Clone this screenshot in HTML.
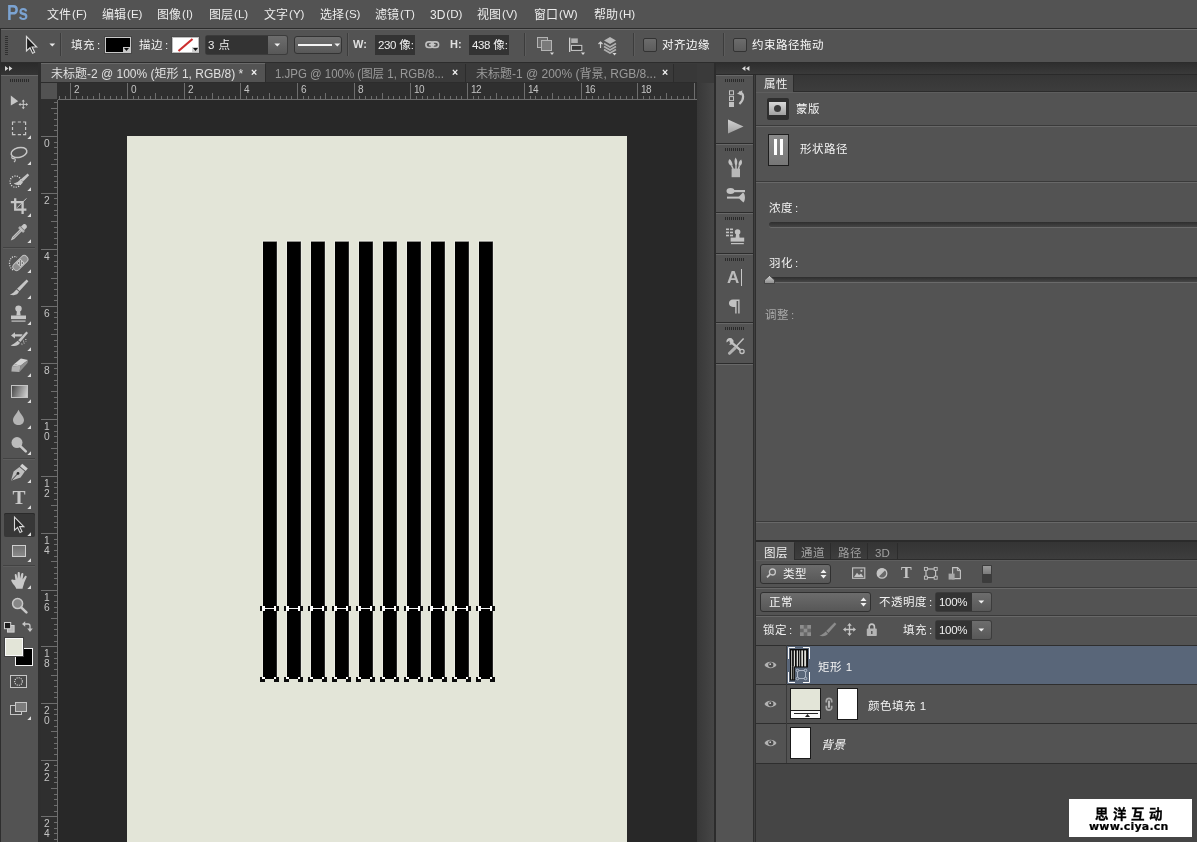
<!DOCTYPE html>
<html lang="zh-CN"><head><meta charset="utf-8"><title>Photoshop</title>
<style>
html,body{margin:0;padding:0;background:#535353;}
body{width:1197px;height:842px;overflow:hidden;}
#root{position:relative;width:1197px;height:842px;overflow:hidden;background:#535353;
 font-family:"Liberation Sans","Noto Sans CJK SC",sans-serif;font-size:12px;color:#e6e6e6;will-change:transform;transform:translateZ(0);}
#root div,#root svg,#root span.a{position:absolute;box-sizing:border-box;}
#root svg{overflow:visible;}
.t{white-space:nowrap;}
</style></head>
<body><div id="root">
<div style="left:0px;top:0px;width:1197px;height:28px;background:#535353;"></div>
<div style="left:0px;top:28px;width:1197px;height:1px;background:#2c2c2c;"></div>
<div style="left:0px;top:29px;width:1197px;height:1px;background:#6b6b6b;"></div>
<div style="left:0px;top:30px;width:1197px;height:32px;background:#535353;"></div>
<div style="left:0px;top:62px;width:1197px;height:1px;background:#2c2c2c;"></div>
<div class="t" style="left:7px;top:1px;font-size:21.5px;line-height:25px;height:25px;color:#7ba3d2;white-space:nowrap;font-weight:bold;transform-origin:0 50%;transform:scaleX(0.8);letter-spacing:0px;">Ps</div>
<div class="t" style="left:47px;top:6.6px;font-size:12px;line-height:16px;height:16px;color:#ececec;white-space:nowrap;width:38px;">文件<span style="font-size:11.6px;margin-left:1px;position:relative;top:-0.6px;">(F)</span></div>
<div class="t" style="left:102px;top:6.6px;font-size:12px;line-height:16px;height:16px;color:#ececec;white-space:nowrap;width:38px;">编辑<span style="font-size:11.6px;margin-left:1px;position:relative;top:-0.6px;">(E)</span></div>
<div class="t" style="left:157px;top:6.6px;font-size:12px;line-height:16px;height:16px;color:#ececec;white-space:nowrap;width:35px;">图像<span style="font-size:11.6px;margin-left:1px;position:relative;top:-0.6px;">(I)</span></div>
<div class="t" style="left:209px;top:6.6px;font-size:12px;line-height:16px;height:16px;color:#ececec;white-space:nowrap;width:38px;">图层<span style="font-size:11.6px;margin-left:1px;position:relative;top:-0.6px;">(L)</span></div>
<div class="t" style="left:264px;top:6.6px;font-size:12px;line-height:16px;height:16px;color:#ececec;white-space:nowrap;width:39px;">文字<span style="font-size:11.6px;margin-left:1px;position:relative;top:-0.6px;">(Y)</span></div>
<div class="t" style="left:320px;top:6.6px;font-size:12px;line-height:16px;height:16px;color:#ececec;white-space:nowrap;width:38px;">选择<span style="font-size:11.6px;margin-left:1px;position:relative;top:-0.6px;">(S)</span></div>
<div class="t" style="left:375px;top:6.6px;font-size:12px;line-height:16px;height:16px;color:#ececec;white-space:nowrap;width:37px;">滤镜<span style="font-size:11.6px;margin-left:1px;position:relative;top:-0.6px;">(T)</span></div>
<div class="t" style="left:430px;top:6.6px;font-size:12px;line-height:16px;height:16px;color:#ececec;white-space:nowrap;width:31px;">3D<span style="font-size:11.6px;margin-left:1px;position:relative;top:-0.6px;">(D)</span></div>
<div class="t" style="left:477px;top:6.6px;font-size:12px;line-height:16px;height:16px;color:#ececec;white-space:nowrap;width:41px;">视图<span style="font-size:11.6px;margin-left:1px;position:relative;top:-0.6px;">(V)</span></div>
<div class="t" style="left:534px;top:6.6px;font-size:12px;line-height:16px;height:16px;color:#ececec;white-space:nowrap;width:44px;">窗口<span style="font-size:11.6px;margin-left:1px;position:relative;top:-0.6px;">(W)</span></div>
<div class="t" style="left:594px;top:6.6px;font-size:12px;line-height:16px;height:16px;color:#ececec;white-space:nowrap;width:42px;">帮助<span style="font-size:11.6px;margin-left:1px;position:relative;top:-0.6px;">(H)</span></div>
<div style="left:5px;top:36px;width:3px;height:1px;background:#303030;"></div>
<div style="left:5px;top:38px;width:3px;height:1px;background:#303030;"></div>
<div style="left:5px;top:40px;width:3px;height:1px;background:#303030;"></div>
<div style="left:5px;top:42px;width:3px;height:1px;background:#303030;"></div>
<div style="left:5px;top:44px;width:3px;height:1px;background:#303030;"></div>
<div style="left:5px;top:46px;width:3px;height:1px;background:#303030;"></div>
<div style="left:5px;top:48px;width:3px;height:1px;background:#303030;"></div>
<div style="left:5px;top:50px;width:3px;height:1px;background:#303030;"></div>
<div style="left:5px;top:52px;width:3px;height:1px;background:#303030;"></div>
<div style="left:5px;top:54px;width:3px;height:1px;background:#303030;"></div>
<div style="left:0px;top:29px;width:1px;height:34px;background:#2e2e2e;"></div>
<svg style="left:25px;top:35px;" width="14" height="20" viewBox="0 0 14 20"><path d="M1.5 1.5 L1.5 16 L5 12.8 L7.6 18.2 L9.6 17.2 L7.1 12 L11.6 12 Z" fill="#1e1e1e" stroke="#d8d8d8" stroke-width="1.2" stroke-linejoin="miter"/></svg>
<svg style="left:48.6px;top:43.4px;" width="7" height="4" viewBox="0 0 7 4"><path d="M0.4 0.4 L6.2 0.4 L3.3 3.4 Z" fill="#e8e8e8"/></svg>
<div style="left:60px;top:33px;width:1px;height:23px;background:#3c3c3c;"></div>
<div style="left:61px;top:33px;width:1px;height:23px;background:#5c5c5c;"></div>
<div class="t" style="left:71px;top:37px;font-size:11.5px;line-height:16px;height:16px;color:#f0f0f0;white-space:nowrap;letter-spacing:0.5px;">填充<span style="margin-left:2px">:</span></div>
<div style="left:104px;top:36px;width:28px;height:18px;background:#474747;"></div>
<div style="left:105px;top:37px;width:26px;height:16px;background:#000;border:1px solid #c8c8c8;"></div>
<svg style="left:123px;top:47px;" width="7" height="5" viewBox="0 0 7 5"><rect x="0" y="0" width="7" height="5" fill="#c8c8c8"/><path d="M1 1 L6 1 L3.5 4 Z" fill="#111"/></svg>
<div class="t" style="left:139px;top:37px;font-size:11.5px;line-height:16px;height:16px;color:#f0f0f0;white-space:nowrap;letter-spacing:0.5px;">描边<span style="margin-left:2px">:</span></div>
<div style="left:171px;top:36px;width:29px;height:18px;background:#4b4b4b;"></div>
<div style="left:172px;top:37px;width:27px;height:16px;background:#fff;border:1px solid #bdbdbd;"></div>
<svg style="left:173px;top:38px;" width="25" height="14" viewBox="0 0 25 14"><path d="M5.5 13 L19.5 1" stroke="#cc2e2e" stroke-width="2.2" fill="none"/></svg>
<svg style="left:192px;top:47px;" width="7" height="5" viewBox="0 0 7 5"><rect x="0" y="0" width="7" height="5" fill="#d0d0d0"/><path d="M1 1 L6 1 L3.5 4 Z" fill="#111"/></svg>
<div style="left:205px;top:35px;width:83px;height:20px;background:#3c3c3c;border-radius:3px;"></div>
<div style="left:206px;top:36px;width:62px;height:18px;background:#333;"></div>
<div style="left:268px;top:36px;width:19px;height:18px;background:linear-gradient(#6d6d6d,#585858);border-radius:0 2px 2px 0;"></div>
<svg style="left:274px;top:43px;" width="7" height="4" viewBox="0 0 7 4"><path d="M0.4 0.4 L6.2 0.4 L3.3 3.4 Z" fill="#f0f0f0"/></svg>
<div class="t" style="left:208px;top:37px;font-size:11.5px;line-height:16px;height:16px;color:#f0f0f0;white-space:nowrap;letter-spacing:0.5px;">3 点</div>
<div style="left:294px;top:36px;width:48px;height:18px;background:linear-gradient(#6e6e6e,#585858);border-radius:3px;border:1px solid #333;"></div>
<div style="left:298px;top:44px;width:34px;height:2px;background:#f4f4f4;"></div>
<svg style="left:334px;top:43px;" width="7" height="4" viewBox="0 0 7 4"><path d="M0.4 0.4 L6.2 0.4 L3.3 3.4 Z" fill="#f0f0f0"/></svg>
<div style="left:347px;top:33px;width:1px;height:23px;background:#3c3c3c;"></div>
<div style="left:348px;top:33px;width:1px;height:23px;background:#5c5c5c;"></div>
<div class="t" style="left:353px;top:36px;font-size:11px;line-height:16px;height:16px;color:#e0e0e0;white-space:nowrap;font-weight:bold;">W:</div>
<div style="left:375px;top:35px;width:40px;height:20px;background:#333;overflow:hidden;"></div>
<div class="t" style="left:378px;top:37px;font-size:11.5px;line-height:16px;height:16px;color:#f0f0f0;white-space:nowrap;"><span style="letter-spacing:-0.4px">230</span> 像:</div>
<svg style="left:425px;top:41px;" width="15" height="8" viewBox="0 0 15 8"><rect x="0.9" y="0.9" width="7.4" height="5.6" rx="2.8" fill="none" stroke="#c0c0c0" stroke-width="1.6"/><rect x="6.2" y="0.9" width="7.4" height="5.6" rx="2.8" fill="none" stroke="#c0c0c0" stroke-width="1.6"/><rect x="4" y="2.9" width="6.5" height="1.6" fill="#c8c8c8"/></svg>
<div class="t" style="left:450px;top:36px;font-size:11px;line-height:16px;height:16px;color:#e0e0e0;white-space:nowrap;font-weight:bold;">H:</div>
<div style="left:469px;top:35px;width:40px;height:20px;background:#333;overflow:hidden;"></div>
<div class="t" style="left:472px;top:37px;font-size:11.5px;line-height:16px;height:16px;color:#f0f0f0;white-space:nowrap;"><span style="letter-spacing:-0.4px">438</span> 像:</div>
<div style="left:524px;top:33px;width:1px;height:23px;background:#3c3c3c;"></div>
<div style="left:525px;top:33px;width:1px;height:23px;background:#5c5c5c;"></div>
<svg style="left:537px;top:37px;" width="18" height="20" viewBox="0 0 18 20"><rect x="0.5" y="0.5" width="10" height="10" fill="#6a6a6a" stroke="#b4b4b4"/><rect x="4.5" y="3.5" width="10" height="10" fill="#7a7a7a" stroke="#b4b4b4"/><path d="M13 15.5 L17 15.5 L15 18 Z" fill="#d8d8d8"/></svg>
<svg style="left:568px;top:37px;" width="18" height="20" viewBox="0 0 18 20"><rect x="1" y="0.6" width="1.3" height="14.4" fill="#d0d0d0"/><rect x="3.2" y="1.4" width="6.6" height="4.6" fill="#b0b0b0"/><rect x="3.4" y="8.4" width="10.4" height="5" fill="#3a3a3a" stroke="#cccccc"/><path d="M13 15.5 L17 15.5 L15 18 Z" fill="#d8d8d8"/></svg>
<svg style="left:598px;top:36px;" width="22" height="22" viewBox="0 0 22 22"><path d="M2.5 12 L2.5 6 M0.5 8 L2.5 6 L4.5 8" stroke="#d0d0d0" stroke-width="1.2" fill="none"/><path d="M12 1 L18 4.5 L12 8 L6 4.5 Z" fill="#b8b8b8"/><path d="M6 7.5 L12 11 L18 7.5 M6 10.5 L12 14 L18 10.5 M6 13.5 L12 17 L18 13.5" stroke="#b0b0b0" stroke-width="1.6" fill="none"/><path d="M14.5 17 L18.5 17 L16.5 19.5 Z" fill="#d8d8d8"/></svg>
<div style="left:633px;top:33px;width:1px;height:23px;background:#3c3c3c;"></div>
<div style="left:634px;top:33px;width:1px;height:23px;background:#5c5c5c;"></div>
<div style="left:643px;top:38px;width:14px;height:14px;background:linear-gradient(#6c6c6c,#5c5c5c);border:1px solid #333;border-radius:2px;"></div>
<div class="t" style="left:662px;top:37px;font-size:11.5px;line-height:16px;height:16px;color:#fafafa;white-space:nowrap;letter-spacing:0.5px;">对齐边缘</div>
<div style="left:723px;top:33px;width:1px;height:23px;background:#3c3c3c;"></div>
<div style="left:724px;top:33px;width:1px;height:23px;background:#5c5c5c;"></div>
<div style="left:733px;top:38px;width:14px;height:14px;background:linear-gradient(#6c6c6c,#5c5c5c);border:1px solid #333;border-radius:2px;"></div>
<div class="t" style="left:752px;top:37px;font-size:11.5px;line-height:16px;height:16px;color:#fafafa;white-space:nowrap;letter-spacing:0.5px;">约束路径拖动</div>
<div style="left:0px;top:63px;width:1197px;height:20px;background:#3a3a3a;"></div>
<div style="left:0px;top:63px;width:38px;height:12px;background:linear-gradient(#2a2a2a,#343434);"></div>
<svg style="left:5px;top:66px;" width="8" height="5" viewBox="0 0 8 5"><path d="M0 0 L3.4 2.5 L0 5 Z M4 0 L7.4 2.5 L4 5 Z" fill="#d8d8d8"/></svg>
<div style="left:38px;top:63px;width:3px;height:779px;background:#2e2e2e;"></div>
<div style="left:41px;top:63px;width:224px;height:20px;background:#535353;"></div>
<div style="left:41px;top:63px;width:224px;height:1px;background:#6a6a6a;"></div>
<div style="left:41px;top:82px;width:656px;height:1px;background:#2c2c2c;"></div>
<div style="left:265px;top:64px;width:1px;height:19px;background:#2c2c2c;"></div>
<div style="left:465px;top:64px;width:1px;height:19px;background:#2c2c2c;"></div>
<div style="left:673px;top:64px;width:1px;height:19px;background:#2c2c2c;"></div>
<div style="left:266px;top:64px;width:199px;height:18px;background:#3a3a3a;"></div>
<div style="left:466px;top:64px;width:207px;height:18px;background:#3a3a3a;"></div>
<div style="left:674px;top:64px;width:23px;height:18px;background:#383838;"></div>
<div class="t" style="left:51px;top:66px;font-size:12px;line-height:16px;height:16px;color:#e0e0e0;white-space:nowrap;">未标题-2 @ 100% (矩形 1, RGB/8) *</div>
<div class="t" style="left:275px;top:66px;font-size:12px;line-height:16px;height:16px;color:#9a9a9a;white-space:nowrap;transform-origin:0 50%;transform:scaleX(0.955);">1.JPG @ 100% (图层 1, RGB/8...</div>
<div class="t" style="left:476px;top:66px;font-size:12px;line-height:16px;height:16px;color:#9a9a9a;white-space:nowrap;">未标题-1 @ 200% (背景, RGB/8...</div>
<div class="t" style="left:249px;top:63.5px;font-size:10.5px;line-height:16px;height:16px;color:#f4f4f4;white-space:nowrap;width:10px;text-align:center;font-weight:bold;">×</div>
<div class="t" style="left:450px;top:63.5px;font-size:10.5px;line-height:16px;height:16px;color:#f4f4f4;white-space:nowrap;width:10px;text-align:center;font-weight:bold;">×</div>
<div class="t" style="left:660px;top:63.5px;font-size:10.5px;line-height:16px;height:16px;color:#f4f4f4;white-space:nowrap;width:10px;text-align:center;font-weight:bold;">×</div>
<div style="left:41px;top:83px;width:656px;height:17px;background:#2f2f2f;"></div>
<div style="left:41px;top:100px;width:17px;height:742px;background:#2f2f2f;"></div>
<div style="left:41px;top:83px;width:16px;height:16px;background:#525252;"></div>
<div style="left:58px;top:100px;width:639px;height:742px;background:#282828;"></div>
<div style="left:58px;top:99px;width:639px;height:1px;background:#6e6e6e;"></div>
<div style="left:57px;top:100px;width:1px;height:742px;background:#6e6e6e;"></div>
<svg style="left:41px;top:83px;" width="656" height="17" viewBox="0 0 656 17"><rect x="18" y="13" width="1" height="3" fill="#6e6e6e"/><rect x="24" y="13" width="1" height="3" fill="#6e6e6e"/><rect x="29" y="0" width="1" height="16" fill="#6e6e6e"/><rect x="35" y="13" width="1" height="3" fill="#6e6e6e"/><rect x="41" y="13" width="1" height="3" fill="#6e6e6e"/><rect x="46" y="13" width="1" height="3" fill="#6e6e6e"/><rect x="52" y="13" width="1" height="3" fill="#6e6e6e"/><rect x="58" y="10" width="1" height="6" fill="#6e6e6e"/><rect x="63" y="13" width="1" height="3" fill="#6e6e6e"/><rect x="69" y="13" width="1" height="3" fill="#6e6e6e"/><rect x="75" y="13" width="1" height="3" fill="#6e6e6e"/><rect x="80" y="13" width="1" height="3" fill="#6e6e6e"/><rect x="86" y="0" width="1" height="16" fill="#6e6e6e"/><rect x="92" y="13" width="1" height="3" fill="#6e6e6e"/><rect x="97" y="13" width="1" height="3" fill="#6e6e6e"/><rect x="103" y="13" width="1" height="3" fill="#6e6e6e"/><rect x="109" y="13" width="1" height="3" fill="#6e6e6e"/><rect x="114" y="10" width="1" height="6" fill="#6e6e6e"/><rect x="120" y="13" width="1" height="3" fill="#6e6e6e"/><rect x="126" y="13" width="1" height="3" fill="#6e6e6e"/><rect x="131" y="13" width="1" height="3" fill="#6e6e6e"/><rect x="137" y="13" width="1" height="3" fill="#6e6e6e"/><rect x="143" y="0" width="1" height="16" fill="#6e6e6e"/><rect x="148" y="13" width="1" height="3" fill="#6e6e6e"/><rect x="154" y="13" width="1" height="3" fill="#6e6e6e"/><rect x="160" y="13" width="1" height="3" fill="#6e6e6e"/><rect x="165" y="13" width="1" height="3" fill="#6e6e6e"/><rect x="171" y="10" width="1" height="6" fill="#6e6e6e"/><rect x="177" y="13" width="1" height="3" fill="#6e6e6e"/><rect x="182" y="13" width="1" height="3" fill="#6e6e6e"/><rect x="188" y="13" width="1" height="3" fill="#6e6e6e"/><rect x="194" y="13" width="1" height="3" fill="#6e6e6e"/><rect x="199" y="0" width="1" height="16" fill="#6e6e6e"/><rect x="205" y="13" width="1" height="3" fill="#6e6e6e"/><rect x="211" y="13" width="1" height="3" fill="#6e6e6e"/><rect x="216" y="13" width="1" height="3" fill="#6e6e6e"/><rect x="222" y="13" width="1" height="3" fill="#6e6e6e"/><rect x="228" y="10" width="1" height="6" fill="#6e6e6e"/><rect x="233" y="13" width="1" height="3" fill="#6e6e6e"/><rect x="239" y="13" width="1" height="3" fill="#6e6e6e"/><rect x="245" y="13" width="1" height="3" fill="#6e6e6e"/><rect x="250" y="13" width="1" height="3" fill="#6e6e6e"/><rect x="256" y="0" width="1" height="16" fill="#6e6e6e"/><rect x="262" y="13" width="1" height="3" fill="#6e6e6e"/><rect x="267" y="13" width="1" height="3" fill="#6e6e6e"/><rect x="273" y="13" width="1" height="3" fill="#6e6e6e"/><rect x="279" y="13" width="1" height="3" fill="#6e6e6e"/><rect x="284" y="10" width="1" height="6" fill="#6e6e6e"/><rect x="290" y="13" width="1" height="3" fill="#6e6e6e"/><rect x="296" y="13" width="1" height="3" fill="#6e6e6e"/><rect x="301" y="13" width="1" height="3" fill="#6e6e6e"/><rect x="307" y="13" width="1" height="3" fill="#6e6e6e"/><rect x="313" y="0" width="1" height="16" fill="#6e6e6e"/><rect x="318" y="13" width="1" height="3" fill="#6e6e6e"/><rect x="324" y="13" width="1" height="3" fill="#6e6e6e"/><rect x="330" y="13" width="1" height="3" fill="#6e6e6e"/><rect x="335" y="13" width="1" height="3" fill="#6e6e6e"/><rect x="341" y="10" width="1" height="6" fill="#6e6e6e"/><rect x="347" y="13" width="1" height="3" fill="#6e6e6e"/><rect x="352" y="13" width="1" height="3" fill="#6e6e6e"/><rect x="358" y="13" width="1" height="3" fill="#6e6e6e"/><rect x="364" y="13" width="1" height="3" fill="#6e6e6e"/><rect x="369" y="0" width="1" height="16" fill="#6e6e6e"/><rect x="375" y="13" width="1" height="3" fill="#6e6e6e"/><rect x="381" y="13" width="1" height="3" fill="#6e6e6e"/><rect x="386" y="13" width="1" height="3" fill="#6e6e6e"/><rect x="392" y="13" width="1" height="3" fill="#6e6e6e"/><rect x="398" y="10" width="1" height="6" fill="#6e6e6e"/><rect x="403" y="13" width="1" height="3" fill="#6e6e6e"/><rect x="409" y="13" width="1" height="3" fill="#6e6e6e"/><rect x="415" y="13" width="1" height="3" fill="#6e6e6e"/><rect x="420" y="13" width="1" height="3" fill="#6e6e6e"/><rect x="426" y="0" width="1" height="16" fill="#6e6e6e"/><rect x="432" y="13" width="1" height="3" fill="#6e6e6e"/><rect x="437" y="13" width="1" height="3" fill="#6e6e6e"/><rect x="443" y="13" width="1" height="3" fill="#6e6e6e"/><rect x="449" y="13" width="1" height="3" fill="#6e6e6e"/><rect x="455" y="10" width="1" height="6" fill="#6e6e6e"/><rect x="460" y="13" width="1" height="3" fill="#6e6e6e"/><rect x="466" y="13" width="1" height="3" fill="#6e6e6e"/><rect x="472" y="13" width="1" height="3" fill="#6e6e6e"/><rect x="477" y="13" width="1" height="3" fill="#6e6e6e"/><rect x="483" y="0" width="1" height="16" fill="#6e6e6e"/><rect x="489" y="13" width="1" height="3" fill="#6e6e6e"/><rect x="494" y="13" width="1" height="3" fill="#6e6e6e"/><rect x="500" y="13" width="1" height="3" fill="#6e6e6e"/><rect x="506" y="13" width="1" height="3" fill="#6e6e6e"/><rect x="511" y="10" width="1" height="6" fill="#6e6e6e"/><rect x="517" y="13" width="1" height="3" fill="#6e6e6e"/><rect x="523" y="13" width="1" height="3" fill="#6e6e6e"/><rect x="528" y="13" width="1" height="3" fill="#6e6e6e"/><rect x="534" y="13" width="1" height="3" fill="#6e6e6e"/><rect x="540" y="0" width="1" height="16" fill="#6e6e6e"/><rect x="545" y="13" width="1" height="3" fill="#6e6e6e"/><rect x="551" y="13" width="1" height="3" fill="#6e6e6e"/><rect x="557" y="13" width="1" height="3" fill="#6e6e6e"/><rect x="562" y="13" width="1" height="3" fill="#6e6e6e"/><rect x="568" y="10" width="1" height="6" fill="#6e6e6e"/><rect x="574" y="13" width="1" height="3" fill="#6e6e6e"/><rect x="579" y="13" width="1" height="3" fill="#6e6e6e"/><rect x="585" y="13" width="1" height="3" fill="#6e6e6e"/><rect x="591" y="13" width="1" height="3" fill="#6e6e6e"/><rect x="596" y="0" width="1" height="16" fill="#6e6e6e"/><rect x="602" y="13" width="1" height="3" fill="#6e6e6e"/><rect x="608" y="13" width="1" height="3" fill="#6e6e6e"/><rect x="613" y="13" width="1" height="3" fill="#6e6e6e"/><rect x="619" y="13" width="1" height="3" fill="#6e6e6e"/><rect x="625" y="10" width="1" height="6" fill="#6e6e6e"/><rect x="630" y="13" width="1" height="3" fill="#6e6e6e"/><rect x="636" y="13" width="1" height="3" fill="#6e6e6e"/><rect x="642" y="13" width="1" height="3" fill="#6e6e6e"/><rect x="647" y="13" width="1" height="3" fill="#6e6e6e"/><rect x="653" y="0" width="1" height="16" fill="#6e6e6e"/></svg>
<div class="t" style="left:74px;top:84.4px;font-size:10px;line-height:12px;height:12px;color:#c4c4c4;white-space:nowrap;letter-spacing:-0.5px;">2</div>
<div class="t" style="left:131px;top:84.4px;font-size:10px;line-height:12px;height:12px;color:#c4c4c4;white-space:nowrap;letter-spacing:-0.5px;">0</div>
<div class="t" style="left:188px;top:84.4px;font-size:10px;line-height:12px;height:12px;color:#c4c4c4;white-space:nowrap;letter-spacing:-0.5px;">2</div>
<div class="t" style="left:244px;top:84.4px;font-size:10px;line-height:12px;height:12px;color:#c4c4c4;white-space:nowrap;letter-spacing:-0.5px;">4</div>
<div class="t" style="left:301px;top:84.4px;font-size:10px;line-height:12px;height:12px;color:#c4c4c4;white-space:nowrap;letter-spacing:-0.5px;">6</div>
<div class="t" style="left:358px;top:84.4px;font-size:10px;line-height:12px;height:12px;color:#c4c4c4;white-space:nowrap;letter-spacing:-0.5px;">8</div>
<div class="t" style="left:414px;top:84.4px;font-size:10px;line-height:12px;height:12px;color:#c4c4c4;white-space:nowrap;letter-spacing:-0.5px;">10</div>
<div class="t" style="left:471px;top:84.4px;font-size:10px;line-height:12px;height:12px;color:#c4c4c4;white-space:nowrap;letter-spacing:-0.5px;">12</div>
<div class="t" style="left:528px;top:84.4px;font-size:10px;line-height:12px;height:12px;color:#c4c4c4;white-space:nowrap;letter-spacing:-0.5px;">14</div>
<div class="t" style="left:585px;top:84.4px;font-size:10px;line-height:12px;height:12px;color:#c4c4c4;white-space:nowrap;letter-spacing:-0.5px;">16</div>
<div class="t" style="left:641px;top:84.4px;font-size:10px;line-height:12px;height:12px;color:#c4c4c4;white-space:nowrap;letter-spacing:-0.5px;">18</div>
<svg style="left:41px;top:100px;" width="17" height="742" viewBox="0 0 17 742"><rect x="13" y="2" width="3" height="1" fill="#6e6e6e"/><rect x="10" y="8" width="6" height="1" fill="#6e6e6e"/><rect x="13" y="13" width="3" height="1" fill="#6e6e6e"/><rect x="13" y="19" width="3" height="1" fill="#6e6e6e"/><rect x="13" y="25" width="3" height="1" fill="#6e6e6e"/><rect x="13" y="30" width="3" height="1" fill="#6e6e6e"/><rect x="0" y="36" width="16" height="1" fill="#6e6e6e"/><rect x="13" y="42" width="3" height="1" fill="#6e6e6e"/><rect x="13" y="47" width="3" height="1" fill="#6e6e6e"/><rect x="13" y="53" width="3" height="1" fill="#6e6e6e"/><rect x="13" y="59" width="3" height="1" fill="#6e6e6e"/><rect x="10" y="64" width="6" height="1" fill="#6e6e6e"/><rect x="13" y="70" width="3" height="1" fill="#6e6e6e"/><rect x="13" y="76" width="3" height="1" fill="#6e6e6e"/><rect x="13" y="81" width="3" height="1" fill="#6e6e6e"/><rect x="13" y="87" width="3" height="1" fill="#6e6e6e"/><rect x="0" y="93" width="16" height="1" fill="#6e6e6e"/><rect x="13" y="98" width="3" height="1" fill="#6e6e6e"/><rect x="13" y="104" width="3" height="1" fill="#6e6e6e"/><rect x="13" y="110" width="3" height="1" fill="#6e6e6e"/><rect x="13" y="115" width="3" height="1" fill="#6e6e6e"/><rect x="10" y="121" width="6" height="1" fill="#6e6e6e"/><rect x="13" y="127" width="3" height="1" fill="#6e6e6e"/><rect x="13" y="132" width="3" height="1" fill="#6e6e6e"/><rect x="13" y="138" width="3" height="1" fill="#6e6e6e"/><rect x="13" y="144" width="3" height="1" fill="#6e6e6e"/><rect x="0" y="149" width="16" height="1" fill="#6e6e6e"/><rect x="13" y="155" width="3" height="1" fill="#6e6e6e"/><rect x="13" y="161" width="3" height="1" fill="#6e6e6e"/><rect x="13" y="166" width="3" height="1" fill="#6e6e6e"/><rect x="13" y="172" width="3" height="1" fill="#6e6e6e"/><rect x="10" y="178" width="6" height="1" fill="#6e6e6e"/><rect x="13" y="183" width="3" height="1" fill="#6e6e6e"/><rect x="13" y="189" width="3" height="1" fill="#6e6e6e"/><rect x="13" y="195" width="3" height="1" fill="#6e6e6e"/><rect x="13" y="200" width="3" height="1" fill="#6e6e6e"/><rect x="0" y="206" width="16" height="1" fill="#6e6e6e"/><rect x="13" y="212" width="3" height="1" fill="#6e6e6e"/><rect x="13" y="217" width="3" height="1" fill="#6e6e6e"/><rect x="13" y="223" width="3" height="1" fill="#6e6e6e"/><rect x="13" y="229" width="3" height="1" fill="#6e6e6e"/><rect x="10" y="234" width="6" height="1" fill="#6e6e6e"/><rect x="13" y="240" width="3" height="1" fill="#6e6e6e"/><rect x="13" y="246" width="3" height="1" fill="#6e6e6e"/><rect x="13" y="251" width="3" height="1" fill="#6e6e6e"/><rect x="13" y="257" width="3" height="1" fill="#6e6e6e"/><rect x="0" y="263" width="16" height="1" fill="#6e6e6e"/><rect x="13" y="268" width="3" height="1" fill="#6e6e6e"/><rect x="13" y="274" width="3" height="1" fill="#6e6e6e"/><rect x="13" y="280" width="3" height="1" fill="#6e6e6e"/><rect x="13" y="285" width="3" height="1" fill="#6e6e6e"/><rect x="10" y="291" width="6" height="1" fill="#6e6e6e"/><rect x="13" y="297" width="3" height="1" fill="#6e6e6e"/><rect x="13" y="302" width="3" height="1" fill="#6e6e6e"/><rect x="13" y="308" width="3" height="1" fill="#6e6e6e"/><rect x="13" y="314" width="3" height="1" fill="#6e6e6e"/><rect x="0" y="319" width="16" height="1" fill="#6e6e6e"/><rect x="13" y="325" width="3" height="1" fill="#6e6e6e"/><rect x="13" y="331" width="3" height="1" fill="#6e6e6e"/><rect x="13" y="336" width="3" height="1" fill="#6e6e6e"/><rect x="13" y="342" width="3" height="1" fill="#6e6e6e"/><rect x="10" y="348" width="6" height="1" fill="#6e6e6e"/><rect x="13" y="353" width="3" height="1" fill="#6e6e6e"/><rect x="13" y="359" width="3" height="1" fill="#6e6e6e"/><rect x="13" y="365" width="3" height="1" fill="#6e6e6e"/><rect x="13" y="370" width="3" height="1" fill="#6e6e6e"/><rect x="0" y="376" width="16" height="1" fill="#6e6e6e"/><rect x="13" y="382" width="3" height="1" fill="#6e6e6e"/><rect x="13" y="387" width="3" height="1" fill="#6e6e6e"/><rect x="13" y="393" width="3" height="1" fill="#6e6e6e"/><rect x="13" y="399" width="3" height="1" fill="#6e6e6e"/><rect x="10" y="405" width="6" height="1" fill="#6e6e6e"/><rect x="13" y="410" width="3" height="1" fill="#6e6e6e"/><rect x="13" y="416" width="3" height="1" fill="#6e6e6e"/><rect x="13" y="422" width="3" height="1" fill="#6e6e6e"/><rect x="13" y="427" width="3" height="1" fill="#6e6e6e"/><rect x="0" y="433" width="16" height="1" fill="#6e6e6e"/><rect x="13" y="439" width="3" height="1" fill="#6e6e6e"/><rect x="13" y="444" width="3" height="1" fill="#6e6e6e"/><rect x="13" y="450" width="3" height="1" fill="#6e6e6e"/><rect x="13" y="456" width="3" height="1" fill="#6e6e6e"/><rect x="10" y="461" width="6" height="1" fill="#6e6e6e"/><rect x="13" y="467" width="3" height="1" fill="#6e6e6e"/><rect x="13" y="473" width="3" height="1" fill="#6e6e6e"/><rect x="13" y="478" width="3" height="1" fill="#6e6e6e"/><rect x="13" y="484" width="3" height="1" fill="#6e6e6e"/><rect x="0" y="490" width="16" height="1" fill="#6e6e6e"/><rect x="13" y="495" width="3" height="1" fill="#6e6e6e"/><rect x="13" y="501" width="3" height="1" fill="#6e6e6e"/><rect x="13" y="507" width="3" height="1" fill="#6e6e6e"/><rect x="13" y="512" width="3" height="1" fill="#6e6e6e"/><rect x="10" y="518" width="6" height="1" fill="#6e6e6e"/><rect x="13" y="524" width="3" height="1" fill="#6e6e6e"/><rect x="13" y="529" width="3" height="1" fill="#6e6e6e"/><rect x="13" y="535" width="3" height="1" fill="#6e6e6e"/><rect x="13" y="541" width="3" height="1" fill="#6e6e6e"/><rect x="0" y="546" width="16" height="1" fill="#6e6e6e"/><rect x="13" y="552" width="3" height="1" fill="#6e6e6e"/><rect x="13" y="558" width="3" height="1" fill="#6e6e6e"/><rect x="13" y="563" width="3" height="1" fill="#6e6e6e"/><rect x="13" y="569" width="3" height="1" fill="#6e6e6e"/><rect x="10" y="575" width="6" height="1" fill="#6e6e6e"/><rect x="13" y="580" width="3" height="1" fill="#6e6e6e"/><rect x="13" y="586" width="3" height="1" fill="#6e6e6e"/><rect x="13" y="592" width="3" height="1" fill="#6e6e6e"/><rect x="13" y="597" width="3" height="1" fill="#6e6e6e"/><rect x="0" y="603" width="16" height="1" fill="#6e6e6e"/><rect x="13" y="609" width="3" height="1" fill="#6e6e6e"/><rect x="13" y="614" width="3" height="1" fill="#6e6e6e"/><rect x="13" y="620" width="3" height="1" fill="#6e6e6e"/><rect x="13" y="626" width="3" height="1" fill="#6e6e6e"/><rect x="10" y="631" width="6" height="1" fill="#6e6e6e"/><rect x="13" y="637" width="3" height="1" fill="#6e6e6e"/><rect x="13" y="643" width="3" height="1" fill="#6e6e6e"/><rect x="13" y="648" width="3" height="1" fill="#6e6e6e"/><rect x="13" y="654" width="3" height="1" fill="#6e6e6e"/><rect x="0" y="660" width="16" height="1" fill="#6e6e6e"/><rect x="13" y="665" width="3" height="1" fill="#6e6e6e"/><rect x="13" y="671" width="3" height="1" fill="#6e6e6e"/><rect x="13" y="677" width="3" height="1" fill="#6e6e6e"/><rect x="13" y="682" width="3" height="1" fill="#6e6e6e"/><rect x="10" y="688" width="6" height="1" fill="#6e6e6e"/><rect x="13" y="694" width="3" height="1" fill="#6e6e6e"/><rect x="13" y="699" width="3" height="1" fill="#6e6e6e"/><rect x="13" y="705" width="3" height="1" fill="#6e6e6e"/><rect x="13" y="711" width="3" height="1" fill="#6e6e6e"/><rect x="0" y="716" width="16" height="1" fill="#6e6e6e"/><rect x="13" y="722" width="3" height="1" fill="#6e6e6e"/><rect x="13" y="728" width="3" height="1" fill="#6e6e6e"/><rect x="13" y="733" width="3" height="1" fill="#6e6e6e"/><rect x="13" y="739" width="3" height="1" fill="#6e6e6e"/></svg>
<div class="t" style="left:44px;top:137.5px;font-size:10.2px;line-height:12px;height:12px;color:#c4c4c4;white-space:nowrap;">0</div>
<div class="t" style="left:44px;top:194.5px;font-size:10.2px;line-height:12px;height:12px;color:#c4c4c4;white-space:nowrap;">2</div>
<div class="t" style="left:44px;top:250.5px;font-size:10.2px;line-height:12px;height:12px;color:#c4c4c4;white-space:nowrap;">4</div>
<div class="t" style="left:44px;top:307.5px;font-size:10.2px;line-height:12px;height:12px;color:#c4c4c4;white-space:nowrap;">6</div>
<div class="t" style="left:44px;top:364.5px;font-size:10.2px;line-height:12px;height:12px;color:#c4c4c4;white-space:nowrap;">8</div>
<div class="t" style="left:44px;top:420.5px;font-size:10.2px;line-height:12px;height:12px;color:#c4c4c4;white-space:nowrap;">1</div>
<div class="t" style="left:44px;top:430.5px;font-size:10.2px;line-height:12px;height:12px;color:#c4c4c4;white-space:nowrap;">0</div>
<div class="t" style="left:44px;top:477.5px;font-size:10.2px;line-height:12px;height:12px;color:#c4c4c4;white-space:nowrap;">1</div>
<div class="t" style="left:44px;top:487.5px;font-size:10.2px;line-height:12px;height:12px;color:#c4c4c4;white-space:nowrap;">2</div>
<div class="t" style="left:44px;top:534.5px;font-size:10.2px;line-height:12px;height:12px;color:#c4c4c4;white-space:nowrap;">1</div>
<div class="t" style="left:44px;top:544.5px;font-size:10.2px;line-height:12px;height:12px;color:#c4c4c4;white-space:nowrap;">4</div>
<div class="t" style="left:44px;top:591.5px;font-size:10.2px;line-height:12px;height:12px;color:#c4c4c4;white-space:nowrap;">1</div>
<div class="t" style="left:44px;top:601.5px;font-size:10.2px;line-height:12px;height:12px;color:#c4c4c4;white-space:nowrap;">6</div>
<div class="t" style="left:44px;top:647.5px;font-size:10.2px;line-height:12px;height:12px;color:#c4c4c4;white-space:nowrap;">1</div>
<div class="t" style="left:44px;top:657.5px;font-size:10.2px;line-height:12px;height:12px;color:#c4c4c4;white-space:nowrap;">8</div>
<div class="t" style="left:44px;top:704.5px;font-size:10.2px;line-height:12px;height:12px;color:#c4c4c4;white-space:nowrap;">2</div>
<div class="t" style="left:44px;top:714.5px;font-size:10.2px;line-height:12px;height:12px;color:#c4c4c4;white-space:nowrap;">0</div>
<div class="t" style="left:44px;top:761.5px;font-size:10.2px;line-height:12px;height:12px;color:#c4c4c4;white-space:nowrap;">2</div>
<div class="t" style="left:44px;top:771.5px;font-size:10.2px;line-height:12px;height:12px;color:#c4c4c4;white-space:nowrap;">2</div>
<div class="t" style="left:44px;top:817.5px;font-size:10.2px;line-height:12px;height:12px;color:#c4c4c4;white-space:nowrap;">2</div>
<div class="t" style="left:44px;top:827.5px;font-size:10.2px;line-height:12px;height:12px;color:#c4c4c4;white-space:nowrap;">4</div>
<div style="left:127px;top:136px;width:500px;height:706px;background:#e3e5d8;"></div>
<div style="left:263px;top:242px;width:14px;height:437px;background:#000;"></div>
<div style="left:287px;top:242px;width:14px;height:437px;background:#000;"></div>
<div style="left:311px;top:242px;width:14px;height:437px;background:#000;"></div>
<div style="left:335px;top:242px;width:14px;height:437px;background:#000;"></div>
<div style="left:359px;top:242px;width:14px;height:437px;background:#000;"></div>
<div style="left:383px;top:242px;width:14px;height:437px;background:#000;"></div>
<div style="left:407px;top:242px;width:14px;height:437px;background:#000;"></div>
<div style="left:431px;top:242px;width:14px;height:437px;background:#000;"></div>
<div style="left:455px;top:242px;width:14px;height:437px;background:#000;"></div>
<div style="left:479px;top:242px;width:14px;height:437px;background:#000;"></div>
<svg style="left:0px;top:0px;pointer-events:none;" width="1197" height="842" viewBox="0 0 1197 842"><rect x="263" y="241" width="14" height="1" fill="#8e8e8a"/><rect x="263" y="240" width="14" height="1" fill="#eaebe2"/><rect x="262" y="241" width="1" height="438" fill="#eaebe2"/><rect x="276" y="242" width="1" height="437" fill="#2a2a2a"/><rect x="277" y="241" width="1" height="438" fill="#eaebe2"/><rect x="260" y="606" width="2" height="5" fill="#0c0c0c"/><rect x="262" y="606" width="3" height="5" fill="#fff"/><rect x="265" y="608" width="9" height="1" fill="#f2f2f2"/><rect x="274" y="606" width="2" height="5" fill="#fff"/><rect x="276" y="606" width="3" height="5" fill="#0c0c0c"/><rect x="260" y="677" width="5" height="5" fill="#0c0c0c"/><rect x="262" y="677" width="3" height="2" fill="#fff"/><rect x="274" y="677" width="5" height="5" fill="#0c0c0c"/><rect x="274" y="677" width="2" height="2" fill="#fff"/><rect x="287" y="241" width="14" height="1" fill="#8e8e8a"/><rect x="287" y="240" width="14" height="1" fill="#eaebe2"/><rect x="286" y="241" width="1" height="438" fill="#eaebe2"/><rect x="300" y="242" width="1" height="437" fill="#2a2a2a"/><rect x="301" y="241" width="1" height="438" fill="#eaebe2"/><rect x="284" y="606" width="2" height="5" fill="#0c0c0c"/><rect x="286" y="606" width="3" height="5" fill="#fff"/><rect x="289" y="608" width="9" height="1" fill="#f2f2f2"/><rect x="298" y="606" width="2" height="5" fill="#fff"/><rect x="300" y="606" width="3" height="5" fill="#0c0c0c"/><rect x="284" y="677" width="5" height="5" fill="#0c0c0c"/><rect x="286" y="677" width="3" height="2" fill="#fff"/><rect x="298" y="677" width="5" height="5" fill="#0c0c0c"/><rect x="298" y="677" width="2" height="2" fill="#fff"/><rect x="311" y="241" width="14" height="1" fill="#8e8e8a"/><rect x="311" y="240" width="14" height="1" fill="#eaebe2"/><rect x="310" y="241" width="1" height="438" fill="#eaebe2"/><rect x="324" y="242" width="1" height="437" fill="#2a2a2a"/><rect x="325" y="241" width="1" height="438" fill="#eaebe2"/><rect x="308" y="606" width="2" height="5" fill="#0c0c0c"/><rect x="310" y="606" width="3" height="5" fill="#fff"/><rect x="313" y="608" width="9" height="1" fill="#f2f2f2"/><rect x="322" y="606" width="2" height="5" fill="#fff"/><rect x="324" y="606" width="3" height="5" fill="#0c0c0c"/><rect x="308" y="677" width="5" height="5" fill="#0c0c0c"/><rect x="310" y="677" width="3" height="2" fill="#fff"/><rect x="322" y="677" width="5" height="5" fill="#0c0c0c"/><rect x="322" y="677" width="2" height="2" fill="#fff"/><rect x="335" y="241" width="14" height="1" fill="#8e8e8a"/><rect x="335" y="240" width="14" height="1" fill="#eaebe2"/><rect x="334" y="241" width="1" height="438" fill="#eaebe2"/><rect x="348" y="242" width="1" height="437" fill="#2a2a2a"/><rect x="349" y="241" width="1" height="438" fill="#eaebe2"/><rect x="332" y="606" width="2" height="5" fill="#0c0c0c"/><rect x="334" y="606" width="3" height="5" fill="#fff"/><rect x="337" y="608" width="9" height="1" fill="#f2f2f2"/><rect x="346" y="606" width="2" height="5" fill="#fff"/><rect x="348" y="606" width="3" height="5" fill="#0c0c0c"/><rect x="332" y="677" width="5" height="5" fill="#0c0c0c"/><rect x="334" y="677" width="3" height="2" fill="#fff"/><rect x="346" y="677" width="5" height="5" fill="#0c0c0c"/><rect x="346" y="677" width="2" height="2" fill="#fff"/><rect x="359" y="241" width="14" height="1" fill="#8e8e8a"/><rect x="359" y="240" width="14" height="1" fill="#eaebe2"/><rect x="358" y="241" width="1" height="438" fill="#eaebe2"/><rect x="372" y="242" width="1" height="437" fill="#2a2a2a"/><rect x="373" y="241" width="1" height="438" fill="#eaebe2"/><rect x="356" y="606" width="2" height="5" fill="#0c0c0c"/><rect x="358" y="606" width="3" height="5" fill="#fff"/><rect x="361" y="608" width="9" height="1" fill="#f2f2f2"/><rect x="370" y="606" width="2" height="5" fill="#fff"/><rect x="372" y="606" width="3" height="5" fill="#0c0c0c"/><rect x="356" y="677" width="5" height="5" fill="#0c0c0c"/><rect x="358" y="677" width="3" height="2" fill="#fff"/><rect x="370" y="677" width="5" height="5" fill="#0c0c0c"/><rect x="370" y="677" width="2" height="2" fill="#fff"/><rect x="383" y="241" width="14" height="1" fill="#8e8e8a"/><rect x="383" y="240" width="14" height="1" fill="#eaebe2"/><rect x="382" y="241" width="1" height="438" fill="#eaebe2"/><rect x="396" y="242" width="1" height="437" fill="#2a2a2a"/><rect x="397" y="241" width="1" height="438" fill="#eaebe2"/><rect x="380" y="606" width="2" height="5" fill="#0c0c0c"/><rect x="382" y="606" width="3" height="5" fill="#fff"/><rect x="385" y="608" width="9" height="1" fill="#f2f2f2"/><rect x="394" y="606" width="2" height="5" fill="#fff"/><rect x="396" y="606" width="3" height="5" fill="#0c0c0c"/><rect x="380" y="677" width="5" height="5" fill="#0c0c0c"/><rect x="382" y="677" width="3" height="2" fill="#fff"/><rect x="394" y="677" width="5" height="5" fill="#0c0c0c"/><rect x="394" y="677" width="2" height="2" fill="#fff"/><rect x="407" y="241" width="14" height="1" fill="#8e8e8a"/><rect x="407" y="240" width="14" height="1" fill="#eaebe2"/><rect x="406" y="241" width="1" height="438" fill="#eaebe2"/><rect x="420" y="242" width="1" height="437" fill="#2a2a2a"/><rect x="421" y="241" width="1" height="438" fill="#eaebe2"/><rect x="404" y="606" width="2" height="5" fill="#0c0c0c"/><rect x="406" y="606" width="3" height="5" fill="#fff"/><rect x="409" y="608" width="9" height="1" fill="#f2f2f2"/><rect x="418" y="606" width="2" height="5" fill="#fff"/><rect x="420" y="606" width="3" height="5" fill="#0c0c0c"/><rect x="404" y="677" width="5" height="5" fill="#0c0c0c"/><rect x="406" y="677" width="3" height="2" fill="#fff"/><rect x="418" y="677" width="5" height="5" fill="#0c0c0c"/><rect x="418" y="677" width="2" height="2" fill="#fff"/><rect x="431" y="241" width="14" height="1" fill="#8e8e8a"/><rect x="431" y="240" width="14" height="1" fill="#eaebe2"/><rect x="430" y="241" width="1" height="438" fill="#eaebe2"/><rect x="444" y="242" width="1" height="437" fill="#2a2a2a"/><rect x="445" y="241" width="1" height="438" fill="#eaebe2"/><rect x="428" y="606" width="2" height="5" fill="#0c0c0c"/><rect x="430" y="606" width="3" height="5" fill="#fff"/><rect x="433" y="608" width="9" height="1" fill="#f2f2f2"/><rect x="442" y="606" width="2" height="5" fill="#fff"/><rect x="444" y="606" width="3" height="5" fill="#0c0c0c"/><rect x="428" y="677" width="5" height="5" fill="#0c0c0c"/><rect x="430" y="677" width="3" height="2" fill="#fff"/><rect x="442" y="677" width="5" height="5" fill="#0c0c0c"/><rect x="442" y="677" width="2" height="2" fill="#fff"/><rect x="455" y="241" width="14" height="1" fill="#8e8e8a"/><rect x="455" y="240" width="14" height="1" fill="#eaebe2"/><rect x="454" y="241" width="1" height="438" fill="#eaebe2"/><rect x="468" y="242" width="1" height="437" fill="#2a2a2a"/><rect x="469" y="241" width="1" height="438" fill="#eaebe2"/><rect x="452" y="606" width="2" height="5" fill="#0c0c0c"/><rect x="454" y="606" width="3" height="5" fill="#fff"/><rect x="457" y="608" width="9" height="1" fill="#f2f2f2"/><rect x="466" y="606" width="2" height="5" fill="#fff"/><rect x="468" y="606" width="3" height="5" fill="#0c0c0c"/><rect x="452" y="677" width="5" height="5" fill="#0c0c0c"/><rect x="454" y="677" width="3" height="2" fill="#fff"/><rect x="466" y="677" width="5" height="5" fill="#0c0c0c"/><rect x="466" y="677" width="2" height="2" fill="#fff"/><rect x="479" y="241" width="14" height="1" fill="#8e8e8a"/><rect x="479" y="240" width="14" height="1" fill="#eaebe2"/><rect x="478" y="241" width="1" height="438" fill="#eaebe2"/><rect x="492" y="242" width="1" height="437" fill="#2a2a2a"/><rect x="493" y="241" width="1" height="438" fill="#eaebe2"/><rect x="476" y="606" width="2" height="5" fill="#0c0c0c"/><rect x="478" y="606" width="3" height="5" fill="#fff"/><rect x="481" y="608" width="9" height="1" fill="#f2f2f2"/><rect x="490" y="606" width="2" height="5" fill="#fff"/><rect x="492" y="606" width="3" height="5" fill="#0c0c0c"/><rect x="476" y="677" width="5" height="5" fill="#0c0c0c"/><rect x="478" y="677" width="3" height="2" fill="#fff"/><rect x="490" y="677" width="5" height="5" fill="#0c0c0c"/><rect x="490" y="677" width="2" height="2" fill="#fff"/></svg>
<div style="left:697px;top:83px;width:17px;height:759px;background:linear-gradient(90deg,#383838,#464646);"></div>
<div style="left:714px;top:63px;width:2px;height:779px;background:#2c2c2c;"></div>
<div style="left:0px;top:75px;width:38px;height:767px;background:#535353;"></div>
<div style="left:0px;top:63px;width:1px;height:779px;background:#2e2e2e;"></div>
<div style="left:1px;top:75px;width:37px;height:1px;background:#686868;"></div>
<svg style="left:10px;top:79px;" width="20" height="3" viewBox="0 0 20 3"><rect x="0" y="0" width="1" height="3" fill="#2a2a2a"/><rect x="2" y="0" width="1" height="3" fill="#2a2a2a"/><rect x="4" y="0" width="1" height="3" fill="#2a2a2a"/><rect x="6" y="0" width="1" height="3" fill="#2a2a2a"/><rect x="8" y="0" width="1" height="3" fill="#2a2a2a"/><rect x="10" y="0" width="1" height="3" fill="#2a2a2a"/><rect x="12" y="0" width="1" height="3" fill="#2a2a2a"/><rect x="14" y="0" width="1" height="3" fill="#2a2a2a"/><rect x="16" y="0" width="1" height="3" fill="#2a2a2a"/><rect x="18" y="0" width="1" height="3" fill="#2a2a2a"/></svg>
<svg style="left:10px;top:95px;" width="20" height="16" viewBox="0 0 20 16"><path d="M0.8 0.6 L0.8 10.6 L8.2 6.2 Z" fill="#c6c6c6"/><path d="M13.3 5.6 L13.3 13.2 M9.5 9.4 L17.1 9.4" stroke="#c6c6c6" stroke-width="1"/><path d="M13.3 4.6 L14.9 6.6 L11.7 6.6 Z M13.3 14.2 L14.9 12.2 L11.7 12.2 Z M8.5 9.4 L10.5 7.8 L10.5 11 Z M18.1 9.4 L16.1 7.8 L16.1 11 Z" fill="#c6c6c6"/></svg>
<svg style="left:11px;top:121px;" width="16" height="15" viewBox="0 0 16 15"><path d="M1.5 4 L1.5 1 L4.5 1 M6.8 1 L10 1 M12 1 L14.6 1 L14.6 4 M14.6 6 L14.6 9 M14.6 11 L14.6 13.6 L12 13.6 M10 13.6 L6.8 13.6 M4.5 13.6 L1.5 13.6 L1.5 11 M1.5 9 L1.5 6" fill="none" stroke="#c6c6c6" stroke-width="1.2"/></svg>
<svg style="left:27px;top:135px;" width="4" height="4" viewBox="0 0 4 4"><path d="M0.3 4 L4 0.3 L4 4 Z" fill="#dcdcdc"/></svg>
<svg style="left:9px;top:146px;" width="20" height="18" viewBox="0 0 20 18"><ellipse cx="10" cy="6.5" rx="8" ry="4.8" fill="none" stroke="#c6c6c6" stroke-width="1.5" transform="rotate(-14 10 6.5)"/><path d="M3.5 10 C2 11.5 3 13 5 12.5 C6.5 12.5 7 14.5 5 16" fill="none" stroke="#c6c6c6" stroke-width="1.2"/></svg>
<svg style="left:27px;top:161px;" width="4" height="4" viewBox="0 0 4 4"><path d="M0.3 4 L4 0.3 L4 4 Z" fill="#dcdcdc"/></svg>
<svg style="left:9px;top:172px;" width="20" height="18" viewBox="0 0 20 18"><circle cx="6.6" cy="9.6" r="5.6" fill="none" stroke="#dcdcdc" stroke-width="1.3" stroke-dasharray="1.1 1.35"/><path d="M18.6 1.6 L20.2 3.2 L14 9.4 L11.6 7.6 Z" fill="#c6c6c6"/><path d="M4.6 11.4 C8 11.2 9.6 9.2 11.4 7.6 L14 9.8 C13.4 12.6 9.6 14.6 4.6 11.4 Z" fill="#c6c6c6"/></svg>
<svg style="left:27px;top:187px;" width="4" height="4" viewBox="0 0 4 4"><path d="M0.3 4 L4 0.3 L4 4 Z" fill="#dcdcdc"/></svg>
<svg style="left:10px;top:197px;" width="18" height="18" viewBox="0 0 18 18"><path d="M5.2 1.2 L5.2 12.6 L16.4 12.6 M0.8 5.2 L12.6 5.2 L12.6 17" fill="none" stroke="#c6c6c6" stroke-width="2.3"/><path d="M16.4 1.4 L7 10.8" stroke="#c6c6c6" stroke-width="1"/></svg>
<svg style="left:27px;top:213px;" width="4" height="4" viewBox="0 0 4 4"><path d="M0.3 4 L4 0.3 L4 4 Z" fill="#dcdcdc"/></svg>
<svg style="left:10px;top:223px;" width="18" height="18" viewBox="0 0 18 18"><path d="M13.2 1.4 C15 0.2 17.8 2.6 16.6 4.8 L14.4 7 L11 3.6 Z" fill="#c6c6c6"/><path d="M9 4 L14 9" stroke="#b0b0b0" stroke-width="2.6"/><path d="M10.6 6.4 L2.6 14.4 L1.8 16.4 L3.8 15.6 L11.8 7.6 Z" fill="#8c8c8c" stroke="#c6c6c6" stroke-width="1.1"/></svg>
<svg style="left:27px;top:239px;" width="4" height="4" viewBox="0 0 4 4"><path d="M0.3 4 L4 0.3 L4 4 Z" fill="#dcdcdc"/></svg>
<div style="left:3px;top:247px;width:32px;height:1px;background:#424242;"></div>
<div style="left:3px;top:248px;width:32px;height:1px;background:#5c5c5c;"></div>
<svg style="left:8px;top:253px;" width="22" height="20" viewBox="0 0 22 20"><path d="M5 17 C0.5 14 0.5 7 4 4.4 C5.4 3.4 7.4 3.4 9 4.2" fill="none" stroke="#e0e0e0" stroke-width="1.2" stroke-dasharray="1.1 1.3"/><g transform="rotate(-45 12.4 10)"><rect x="3.4" y="6.4" width="18" height="7.2" rx="3.4" fill="#8e8e8e" stroke="#c4c4c4" stroke-width="1"/><rect x="9.4" y="6.9" width="6" height="6.2" fill="#cacaca"/><circle cx="11" cy="8.6" r="0.65" fill="#4a4a4a"/><circle cx="13.8" cy="8.6" r="0.65" fill="#4a4a4a"/><circle cx="11" cy="11.4" r="0.65" fill="#4a4a4a"/><circle cx="13.8" cy="11.4" r="0.65" fill="#4a4a4a"/><circle cx="12.4" cy="10" r="0.65" fill="#4a4a4a"/></g></svg>
<svg style="left:27px;top:269px;" width="4" height="4" viewBox="0 0 4 4"><path d="M0.3 4 L4 0.3 L4 4 Z" fill="#dcdcdc"/></svg>
<svg style="left:9px;top:279px;" width="20" height="18" viewBox="0 0 20 18"><path d="M17.6 0.6 L19.4 2.2 L10.6 12 L8 9.8 Z" fill="#c6c6c6"/><path d="M7.4 10.4 L10 12.6 C9 16 5 17 0.8 15.4 C3.6 14.6 5 13 7.4 10.4 Z" fill="#c6c6c6"/></svg>
<svg style="left:27px;top:295px;" width="4" height="4" viewBox="0 0 4 4"><path d="M0.3 4 L4 0.3 L4 4 Z" fill="#dcdcdc"/></svg>
<svg style="left:10px;top:305px;" width="18" height="18" viewBox="0 0 18 18"><circle cx="8.5" cy="3.6" r="3.2" fill="#c6c6c6"/><path d="M7 5 L10 5 L10.6 10.5 L6.4 10.5 Z" fill="#c6c6c6"/><rect x="1" y="10.5" width="15" height="3.6" fill="#c6c6c6"/><rect x="1.5" y="15.5" width="14" height="1.2" fill="#c6c6c6"/></svg>
<svg style="left:27px;top:321px;" width="4" height="4" viewBox="0 0 4 4"><path d="M0.3 4 L4 0.3 L4 4 Z" fill="#dcdcdc"/></svg>
<svg style="left:9px;top:331px;" width="20" height="17" viewBox="0 0 20 17"><path d="M17.4 0.6 L19 2 L11.4 11 L9.2 9.2 Z" fill="#c6c6c6"/><path d="M8.6 9.8 L11 11.8 C10 14.6 6 15.6 1.6 14.4 C4.4 13.4 6 12 8.6 9.8 Z" fill="#c6c6c6"/><path d="M2 4.4 L6 1.2 L6 3.2 L13.6 3.2 L12.2 5.6 L6 5.6 L6 7.4 Z" fill="#c6c6c6"/><path d="M14.4 9.6 L15.4 13.4 M16.8 8 L17 10.4 M12.8 12.6 L13.2 14.6" stroke="#e0e0e0" stroke-width="1" stroke-dasharray="1 1"/></svg>
<svg style="left:27px;top:347px;" width="4" height="4" viewBox="0 0 4 4"><path d="M0.3 4 L4 0.3 L4 4 Z" fill="#dcdcdc"/></svg>
<svg style="left:10px;top:357px;" width="18" height="16" viewBox="0 0 18 16"><path d="M4.2 7 L10.9 1.6 L18 3 L10.4 8.8 Z" fill="#d4d4d4"/><path d="M1.9 9.4 L10.4 8.8 L9.5 15 L1.4 14.6 Z" fill="#b0b0b0"/><path d="M10.4 8.8 L18 3 L17.5 6 L9.5 15 Z" fill="#8e8e8e"/><path d="M4.2 7 L10.4 8.8 L1.9 9.4 Z" fill="#c4c4c4"/></svg>
<svg style="left:27px;top:373px;" width="4" height="4" viewBox="0 0 4 4"><path d="M0.3 4 L4 0.3 L4 4 Z" fill="#dcdcdc"/></svg>
<div style="left:11px;top:385px;width:17px;height:13px;background:linear-gradient(110deg,#4e4e4e 5%,#cdcdcd 95%);border:1px solid #c4c4c4;"></div>
<svg style="left:27px;top:399px;" width="4" height="4" viewBox="0 0 4 4"><path d="M0.3 4 L4 0.3 L4 4 Z" fill="#dcdcdc"/></svg>
<svg style="left:12px;top:409px;" width="14" height="17" viewBox="0 0 14 17"><path d="M6.5 0.8 C8 4.5 12 7.6 12 11 C12 14 9.6 16 6.5 16 C3.4 16 1 14 1 11 C1 7.6 5 4.5 6.5 0.8 Z" fill="#b4b4b4"/></svg>
<svg style="left:27px;top:425px;" width="4" height="4" viewBox="0 0 4 4"><path d="M0.3 4 L4 0.3 L4 4 Z" fill="#dcdcdc"/></svg>
<svg style="left:10px;top:436px;" width="18" height="18" viewBox="0 0 18 18"><circle cx="7" cy="6.6" r="5.5" fill="#bcbcbc"/><path d="M10.6 10.4 L15.8 15.4" stroke="#c8c8c8" stroke-width="2.6" stroke-linecap="round"/></svg>
<svg style="left:27px;top:451px;" width="4" height="4" viewBox="0 0 4 4"><path d="M0.3 4 L4 0.3 L4 4 Z" fill="#dcdcdc"/></svg>
<div style="left:3px;top:458px;width:32px;height:1px;background:#424242;"></div>
<div style="left:3px;top:459px;width:32px;height:1px;background:#5c5c5c;"></div>
<svg style="left:10px;top:463px;" width="18" height="19" viewBox="0 0 18 19"><path d="M12.2 0.8 L17.8 5.6 L15.6 8 L10 3.2 Z" fill="#d0d0d0"/><path d="M9.4 4 L14.8 8.6 L10.6 14.4 L1 17.8 L3.6 8.4 Z" fill="#bebebe"/><path d="M1.4 17.4 L7.4 11" stroke="#3c3c3c" stroke-width="1"/><circle cx="8" cy="10.4" r="1.4" fill="#2e2e2e"/></svg>
<svg style="left:27px;top:479px;" width="4" height="4" viewBox="0 0 4 4"><path d="M0.3 4 L4 0.3 L4 4 Z" fill="#dcdcdc"/></svg>
<div class="t" style="left:11px;top:488px;font-size:19.5px;line-height:20px;height:20px;color:#c8c8c8;white-space:nowrap;font-family:'Liberation Serif',serif;width:16px;text-align:center;font-weight:bold;">T</div>
<svg style="left:27px;top:505px;" width="4" height="4" viewBox="0 0 4 4"><path d="M0.3 4 L4 0.3 L4 4 Z" fill="#dcdcdc"/></svg>
<div style="left:4px;top:513px;width:31px;height:24px;background:#373737;border-radius:2px;box-shadow:inset 0 1px 0 #2a2a2a;"></div>
<svg style="left:13px;top:516px;" width="12" height="18" viewBox="0 0 12 18"><path d="M1.5 1.2 L1.5 14.2 L4.6 11.4 L7 16.6 L9 15.6 L6.6 10.6 L10.8 10.6 Z" fill="#262626" stroke="#d8d8d8" stroke-width="1.1" stroke-linejoin="miter"/></svg>
<svg style="left:27px;top:532px;" width="4" height="4" viewBox="0 0 4 4"><path d="M0.3 4 L4 0.3 L4 4 Z" fill="#dcdcdc"/></svg>
<div style="left:12px;top:545px;width:14px;height:12px;background:linear-gradient(#707070,#8a8a8a);border:1px solid #cfcfcf;"></div>
<svg style="left:27px;top:558px;" width="4" height="4" viewBox="0 0 4 4"><path d="M0.3 4 L4 0.3 L4 4 Z" fill="#dcdcdc"/></svg>
<div style="left:3px;top:565px;width:32px;height:1px;background:#424242;"></div>
<div style="left:3px;top:566px;width:32px;height:1px;background:#5c5c5c;"></div>
<svg style="left:9.6px;top:570.6px;" width="19" height="19" viewBox="0 0 17 18"><path d="M4.6 8.6 L4 4 C3.8 2.6 5.6 2.4 5.8 3.6 L6.6 7.4 L6.8 2 C6.8 0.6 8.8 0.6 8.8 2 L9 7.2 L10.2 2.6 C10.6 1.4 12.4 1.8 12.2 3 L11.4 8 L13.6 5 C14.4 4 15.8 5 15.2 6 L13 11 C12.6 13.4 11.6 15 11.4 16.8 L5.4 16.8 C5 15 3.6 13.6 2.4 12.2 L0.8 9.4 C0.2 8.4 1.6 7.6 2.4 8.4 Z" fill="#c8c8c8"/></svg>
<svg style="left:27px;top:585px;" width="4" height="4" viewBox="0 0 4 4"><path d="M0.3 4 L4 0.3 L4 4 Z" fill="#dcdcdc"/></svg>
<svg style="left:11px;top:597px;" width="18" height="18" viewBox="0 0 18 18"><circle cx="6.6" cy="6.6" r="5" fill="#868686" stroke="#c8c8c8" stroke-width="1.5"/><path d="M10.4 10.6 L15.4 15.4" stroke="#c8c8c8" stroke-width="2.6" stroke-linecap="round"/></svg>
<svg style="left:4px;top:622px;" width="11" height="11" viewBox="0 0 11 11"><rect x="3.5" y="3.5" width="6.6" height="6.6" fill="#b8b8b8" stroke="#d0d0d0" stroke-width="1"/><rect x="0.5" y="0.5" width="6.2" height="6.2" fill="#1c1c1c" stroke="#d0d0d0" stroke-width="1"/></svg>
<svg style="left:22px;top:621px;" width="11" height="11" viewBox="0 0 11 11"><path d="M2.6 3 L6 3 C7.4 3 8 3.8 8 5 L8 8" fill="none" stroke="#c6c6c6" stroke-width="1.3"/><path d="M0 3 L3.2 0.2 L3.2 5.8 Z M8 11 L5.2 7.6 L10.8 7.6 Z" fill="#c6c6c6"/></svg>
<div style="left:15px;top:648px;width:18px;height:18px;background:#000;border:1px solid #f4f4f4;"></div>
<div style="left:5px;top:638px;width:18px;height:18px;background:#e3e5d8;border:1px solid #fafafa;box-shadow:0 0 0 1px #404040;"></div>
<svg style="left:10px;top:675px;" width="18" height="14" viewBox="0 0 18 14"><rect x="0.5" y="0.5" width="16" height="12" fill="#4a4a4a" stroke="#c6c6c6" stroke-width="1"/><circle cx="8.5" cy="6.5" r="3.8" fill="none" stroke="#e0e0e0" stroke-width="1.1" stroke-dasharray="1.1 1.1"/></svg>
<svg style="left:10px;top:702px;" width="18" height="14" viewBox="0 0 18 14"><rect x="0.5" y="3.5" width="11" height="9" fill="#4e4e4e" stroke="#c6c6c6" stroke-width="1"/><rect x="5.5" y="0.5" width="11" height="9" fill="#7c7c7c" stroke="#c6c6c6" stroke-width="1"/></svg>
<svg style="left:27px;top:716px;" width="4" height="4" viewBox="0 0 4 4"><path d="M0.3 4 L4 0.3 L4 4 Z" fill="#dcdcdc"/></svg>
<div style="left:716px;top:63px;width:481px;height:12px;background:linear-gradient(#2e2e2e,#3b3b3b);"></div>
<div style="left:716px;top:74px;width:481px;height:1px;background:#2a2a2a;"></div>
<svg style="left:742px;top:66px;" width="8" height="5" viewBox="0 0 8 5"><path d="M3.4 0 L0 2.5 L3.4 5 Z M7.4 0 L4 2.5 L7.4 5 Z" fill="#dcdcdc"/></svg>
<div style="left:716px;top:75px;width:37px;height:767px;background:#535353;"></div>
<div style="left:753px;top:75px;width:3px;height:767px;background:#2e2e2e;"></div>
<div style="left:754px;top:75px;width:1px;height:767px;background:#3e3e3e;"></div>
<div style="left:716px;top:75px;width:37px;height:1px;background:#686868;"></div>
<svg style="left:725px;top:79px;" width="20" height="3" viewBox="0 0 20 3"><rect x="0" y="0" width="1" height="3" fill="#2a2a2a"/><rect x="2" y="0" width="1" height="3" fill="#2a2a2a"/><rect x="4" y="0" width="1" height="3" fill="#2a2a2a"/><rect x="6" y="0" width="1" height="3" fill="#2a2a2a"/><rect x="8" y="0" width="1" height="3" fill="#2a2a2a"/><rect x="10" y="0" width="1" height="3" fill="#2a2a2a"/><rect x="12" y="0" width="1" height="3" fill="#2a2a2a"/><rect x="14" y="0" width="1" height="3" fill="#2a2a2a"/><rect x="16" y="0" width="1" height="3" fill="#2a2a2a"/><rect x="18" y="0" width="1" height="3" fill="#2a2a2a"/></svg>
<div style="left:716px;top:143px;width:37px;height:1px;background:#2c2c2c;"></div>
<svg style="left:728px;top:90px;" width="17" height="18" viewBox="0 0 17 18"><rect x="1.5" y="0.8" width="4" height="4" fill="none" stroke="#c2c2c2" stroke-width="1"/><rect x="1.5" y="6.6" width="4" height="4" fill="none" stroke="#c2c2c2" stroke-width="1"/><rect x="1" y="12" width="5" height="5" fill="#c2c2c2"/><path d="M11 2.4 C16.4 2.6 16.4 9.6 11.4 14" fill="none" stroke="#c2c2c2" stroke-width="2.2"/><path d="M9 3.4 L14.4 0.2 L13.4 5.6 Z" fill="#c2c2c2"/></svg>
<svg style="left:728px;top:119px;" width="16" height="15" viewBox="0 0 16 15"><defs><linearGradient id="pg" x1="0" y1="0" x2="0" y2="1"><stop offset="0" stop-color="#d2d2d2"/><stop offset="1" stop-color="#a0a0a0"/></linearGradient></defs><path d="M0 0.5 L15.5 7.5 L0 14.5 Z" fill="url(#pg)"/></svg>
<div style="left:716px;top:144px;width:37px;height:1px;background:#686868;"></div>
<svg style="left:725px;top:148px;" width="20" height="3" viewBox="0 0 20 3"><rect x="0" y="0" width="1" height="3" fill="#2a2a2a"/><rect x="2" y="0" width="1" height="3" fill="#2a2a2a"/><rect x="4" y="0" width="1" height="3" fill="#2a2a2a"/><rect x="6" y="0" width="1" height="3" fill="#2a2a2a"/><rect x="8" y="0" width="1" height="3" fill="#2a2a2a"/><rect x="10" y="0" width="1" height="3" fill="#2a2a2a"/><rect x="12" y="0" width="1" height="3" fill="#2a2a2a"/><rect x="14" y="0" width="1" height="3" fill="#2a2a2a"/><rect x="16" y="0" width="1" height="3" fill="#2a2a2a"/><rect x="18" y="0" width="1" height="3" fill="#2a2a2a"/></svg>
<div style="left:716px;top:212px;width:37px;height:1px;background:#2c2c2c;"></div>
<svg style="left:726px;top:157px;" width="20" height="21" viewBox="0 0 20 21"><path d="M3.6 2 C1.6 4.4 2 7 5.4 9 L6.6 8 C6.4 5.6 5.4 3.6 3.6 2 Z M9.6 0.6 C8 3 8.4 6 9.2 8 L10.8 8 C11.6 6 11.6 3 9.6 0.6 Z M15.2 2.4 C12.8 3.6 12.4 6.4 12.6 8.4 L14 9 C16 7.6 16.8 5 15.2 2.4 Z" fill="#c2c2c2"/><path d="M5.6 8.6 L7.2 12 M10 8 L10 12 M13.4 8.8 L12.4 12" stroke="#c2c2c2" stroke-width="1.4"/><rect x="5.6" y="11.6" width="8.4" height="8.6" fill="#b8b8b8"/></svg>
<svg style="left:726px;top:187px;" width="20" height="18" viewBox="0 0 20 18"><ellipse cx="4.5" cy="4" rx="4" ry="3" fill="#c2c2c2"/><rect x="7" y="3" width="12" height="2.2" fill="#c2c2c2"/><rect x="1" y="9.6" width="12" height="2" fill="#c2c2c2"/><path d="M12 10.6 L17 5.6 C19.4 7 19.6 13.4 17.4 15.6 Z" fill="#c2c2c2"/></svg>
<div style="left:716px;top:213px;width:37px;height:1px;background:#686868;"></div>
<svg style="left:725px;top:217px;" width="20" height="3" viewBox="0 0 20 3"><rect x="0" y="0" width="1" height="3" fill="#2a2a2a"/><rect x="2" y="0" width="1" height="3" fill="#2a2a2a"/><rect x="4" y="0" width="1" height="3" fill="#2a2a2a"/><rect x="6" y="0" width="1" height="3" fill="#2a2a2a"/><rect x="8" y="0" width="1" height="3" fill="#2a2a2a"/><rect x="10" y="0" width="1" height="3" fill="#2a2a2a"/><rect x="12" y="0" width="1" height="3" fill="#2a2a2a"/><rect x="14" y="0" width="1" height="3" fill="#2a2a2a"/><rect x="16" y="0" width="1" height="3" fill="#2a2a2a"/><rect x="18" y="0" width="1" height="3" fill="#2a2a2a"/></svg>
<div style="left:716px;top:253px;width:37px;height:1px;background:#2c2c2c;"></div>
<svg style="left:726px;top:228px;" width="20" height="18" viewBox="0 0 20 18"><rect x="0" y="0.5" width="3" height="1.6" fill="#c2c2c2"/><rect x="4" y="0.5" width="3" height="1.6" fill="#c2c2c2"/><rect x="0" y="3.6" width="3" height="1.6" fill="#c2c2c2"/><rect x="4" y="3.6" width="3" height="1.6" fill="#c2c2c2"/><rect x="0" y="6.7" width="3" height="1.6" fill="#c2c2c2"/><rect x="4" y="6.7" width="3" height="1.6" fill="#c2c2c2"/><circle cx="11.6" cy="4" r="2.8" fill="#c2c2c2"/><path d="M10.2 5 L13 5 L13.6 10 L9.6 10 Z" fill="#c2c2c2"/><rect x="4.6" y="9.6" width="13.6" height="4" fill="#c2c2c2"/><rect x="5" y="15" width="12.8" height="1.2" fill="#c2c2c2"/></svg>
<div style="left:716px;top:254px;width:37px;height:1px;background:#686868;"></div>
<svg style="left:725px;top:258px;" width="20" height="3" viewBox="0 0 20 3"><rect x="0" y="0" width="1" height="3" fill="#2a2a2a"/><rect x="2" y="0" width="1" height="3" fill="#2a2a2a"/><rect x="4" y="0" width="1" height="3" fill="#2a2a2a"/><rect x="6" y="0" width="1" height="3" fill="#2a2a2a"/><rect x="8" y="0" width="1" height="3" fill="#2a2a2a"/><rect x="10" y="0" width="1" height="3" fill="#2a2a2a"/><rect x="12" y="0" width="1" height="3" fill="#2a2a2a"/><rect x="14" y="0" width="1" height="3" fill="#2a2a2a"/><rect x="16" y="0" width="1" height="3" fill="#2a2a2a"/><rect x="18" y="0" width="1" height="3" fill="#2a2a2a"/></svg>
<div style="left:716px;top:322px;width:37px;height:1px;background:#2c2c2c;"></div>
<div class="t" style="left:727px;top:268px;font-size:17px;line-height:20px;height:20px;color:#bcbcbc;white-space:nowrap;font-weight:bold;">A</div>
<div style="left:741px;top:269px;width:1px;height:17px;background:#c8c8c8;"></div>
<svg style="left:728px;top:299px;" width="13" height="15" viewBox="0 0 13 15"><path d="M5 0.6 L11.6 0.6 L11.6 14.4 L10.2 14.4 L10.2 2 L8.6 2 L8.6 14.4 L7.2 14.4 L7.2 8 L5 8 C-0.4 8 -0.4 0.6 5 0.6 Z" fill="#c2c2c2"/></svg>
<div style="left:716px;top:323px;width:37px;height:1px;background:#686868;"></div>
<svg style="left:725px;top:327px;" width="20" height="3" viewBox="0 0 20 3"><rect x="0" y="0" width="1" height="3" fill="#2a2a2a"/><rect x="2" y="0" width="1" height="3" fill="#2a2a2a"/><rect x="4" y="0" width="1" height="3" fill="#2a2a2a"/><rect x="6" y="0" width="1" height="3" fill="#2a2a2a"/><rect x="8" y="0" width="1" height="3" fill="#2a2a2a"/><rect x="10" y="0" width="1" height="3" fill="#2a2a2a"/><rect x="12" y="0" width="1" height="3" fill="#2a2a2a"/><rect x="14" y="0" width="1" height="3" fill="#2a2a2a"/><rect x="16" y="0" width="1" height="3" fill="#2a2a2a"/><rect x="18" y="0" width="1" height="3" fill="#2a2a2a"/></svg>
<div style="left:716px;top:363px;width:37px;height:1px;background:#2c2c2c;"></div>
<svg style="left:725px;top:337px;" width="21" height="19" viewBox="0 0 21 19"><path d="M5.6 4.6 L15.4 13.2" stroke="#c2c2c2" stroke-width="2.4" stroke-linecap="round"/><path d="M6.6 1.2 C3.6 0.2 0.8 2.4 1.6 5.6 L4.4 3.4 L6.4 5.2 L4 7.6 C6.8 8.4 9.2 5.8 8.4 3.2" fill="#c2c2c2"/><circle cx="17" cy="14.4" r="2.1" fill="#535353" stroke="#c2c2c2" stroke-width="1.3"/><path d="M18.6 1.4 L10.4 10.2" stroke="#c2c2c2" stroke-width="1.5"/><path d="M9.6 9.2 L11.8 11.4 L5.4 17.6 C4 18.6 2.2 17 3.2 15.6 Z" fill="#b0b0b0"/></svg>
<div style="left:716px;top:364px;width:37px;height:1px;background:#686868;"></div>
<div style="left:756px;top:75px;width:441px;height:17px;background:linear-gradient(#363636,#3d3d3d);"></div>
<div style="left:756px;top:75px;width:37px;height:18px;background:#535353;"></div>
<div style="left:793px;top:75px;width:1px;height:17px;background:#2c2c2c;"></div>
<div style="left:756px;top:92px;width:441px;height:1px;background:#5e5e5e;"></div>
<div style="left:793px;top:91px;width:404px;height:1px;background:#2c2c2c;"></div>
<div class="t" style="left:764px;top:76px;font-size:11.5px;line-height:16px;height:16px;color:#f0f0f0;white-space:nowrap;letter-spacing:0.5px;">属性</div>
<div style="left:756px;top:93px;width:441px;height:429px;background:#535353;"></div>
<div style="left:767px;top:98px;width:22px;height:22px;background:#2e2e2e;border-radius:2px;"></div>
<div style="left:769px;top:102px;width:17px;height:13px;background:linear-gradient(#d8d8d8,#a0a0a0);"></div>
<div style="left:774px;top:105px;width:7px;height:7px;background:#3a3a3a;border-radius:50%;"></div>
<div class="t" style="left:796px;top:101px;font-size:11.5px;line-height:16px;height:16px;color:#f4f4f4;white-space:nowrap;letter-spacing:0.5px;">蒙版</div>
<div style="left:756px;top:125px;width:441px;height:1px;background:#3a3a3a;"></div>
<div style="left:756px;top:126px;width:441px;height:1px;background:#686868;"></div>
<div style="left:768px;top:134px;width:21px;height:32px;background:linear-gradient(#8a8a8a,#777);border:1px solid #1e1e1e;"></div>
<div style="left:774px;top:139px;width:3px;height:16px;background:#fff;"></div>
<div style="left:780px;top:139px;width:3px;height:16px;background:#fff;"></div>
<div class="t" style="left:800px;top:141px;font-size:11.5px;line-height:16px;height:16px;color:#f4f4f4;white-space:nowrap;letter-spacing:0.5px;">形状路径</div>
<div style="left:756px;top:181px;width:441px;height:1px;background:#3a3a3a;"></div>
<div style="left:756px;top:182px;width:441px;height:1px;background:#686868;"></div>
<div class="t" style="left:769px;top:200px;font-size:11.5px;line-height:16px;height:16px;color:#f0f0f0;white-space:nowrap;letter-spacing:0.5px;">浓度<span style="margin-left:2px">:</span></div>
<div style="left:769px;top:222px;width:428px;height:5px;background:linear-gradient(#2e2e2e,#454545);border-radius:3px 0 0 3px;box-shadow:0 1px 0 #6a6a6a;"></div>
<div class="t" style="left:769px;top:255px;font-size:11.5px;line-height:16px;height:16px;color:#f0f0f0;white-space:nowrap;letter-spacing:0.5px;">羽化<span style="margin-left:2px">:</span></div>
<div style="left:769px;top:277px;width:428px;height:5px;background:linear-gradient(#2e2e2e,#454545);border-radius:3px 0 0 3px;box-shadow:0 1px 0 #6a6a6a;"></div>
<svg style="left:764px;top:275px;" width="11" height="9" viewBox="0 0 11 9"><defs><linearGradient id="tg" x1="0" y1="0" x2="0" y2="1"><stop offset="0" stop-color="#d0d0d0"/><stop offset="1" stop-color="#8c8c8c"/></linearGradient></defs><path d="M5.5 0.5 L10.5 5 L10.5 8.5 L0.5 8.5 L0.5 5 Z" fill="url(#tg)" stroke="#3a3a3a" stroke-width="0.8"/></svg>
<div class="t" style="left:765px;top:307px;font-size:11.5px;line-height:16px;height:16px;color:#a8a8a8;white-space:nowrap;letter-spacing:0.5px;">调整<span style="margin-left:2px">:</span></div>
<div style="left:756px;top:521px;width:441px;height:1px;background:#3a3a3a;"></div>
<div style="left:756px;top:522px;width:441px;height:1px;background:#686868;"></div>
<div style="left:756px;top:523px;width:441px;height:17px;background:#535353;"></div>
<div style="left:756px;top:540px;width:441px;height:2px;background:#2a2a2a;"></div>
<div style="left:756px;top:542px;width:441px;height:18px;background:linear-gradient(#343434,#3e3e3e);"></div>
<div style="left:756px;top:542px;width:38px;height:18px;background:#535353;"></div>
<div style="left:794px;top:543px;width:1px;height:17px;background:#2c2c2c;"></div>
<div style="left:830px;top:543px;width:1px;height:17px;background:#2c2c2c;"></div>
<div style="left:867px;top:543px;width:1px;height:17px;background:#2c2c2c;"></div>
<div style="left:897px;top:543px;width:1px;height:17px;background:#2c2c2c;"></div>
<div style="left:794px;top:559px;width:403px;height:1px;background:#2c2c2c;"></div>
<div style="left:756px;top:560px;width:441px;height:1px;background:#5e5e5e;"></div>
<div class="t" style="left:764px;top:545px;font-size:11.5px;line-height:16px;height:16px;color:#f0f0f0;white-space:nowrap;letter-spacing:0.5px;">图层</div>
<div class="t" style="left:801px;top:545px;font-size:11.5px;line-height:16px;height:16px;color:#a0a0a0;white-space:nowrap;letter-spacing:0.5px;">通道</div>
<div class="t" style="left:838px;top:545px;font-size:11.5px;line-height:16px;height:16px;color:#a0a0a0;white-space:nowrap;letter-spacing:0.5px;">路径</div>
<div class="t" style="left:875px;top:545px;font-size:11.5px;line-height:16px;height:16px;color:#a0a0a0;white-space:nowrap;">3D</div>
<div style="left:756px;top:561px;width:441px;height:84px;background:#535353;"></div>
<div style="left:760px;top:564px;width:71px;height:20px;background:linear-gradient(#6c6c6c,#575757);border:1px solid #303030;border-radius:3px;"></div>
<svg style="left:766px;top:568px;" width="11" height="11" viewBox="0 0 11 11"><circle cx="6.4" cy="4" r="3" fill="none" stroke="#c8c8c8" stroke-width="1.3"/><path d="M4.2 6.2 L1 9.4" stroke="#c8c8c8" stroke-width="1.7"/></svg>
<div class="t" style="left:783px;top:566px;font-size:11.5px;line-height:16px;height:16px;color:#f4f4f4;white-space:nowrap;letter-spacing:0.5px;">类型</div>
<svg style="left:820px;top:569px;" width="7" height="10" viewBox="0 0 7 10"><path d="M0.5 4 L3.5 0.5 L6.5 4 Z M0.5 6 L6.5 6 L3.5 9.5 Z" fill="#f0f0f0"/></svg>
<svg style="left:852px;top:567px;" width="14" height="13" viewBox="0 0 14 13"><rect x="0.6" y="0.9" width="12.2" height="10.4" fill="#5a5a5a" stroke="#c4c4c4" stroke-width="1.1"/><path d="M2 10 L5 5.8 L7 8 L9 6.6 L11.6 10 Z" fill="#c4c4c4"/><circle cx="9.4" cy="3.8" r="1.1" fill="#c4c4c4"/></svg>
<svg style="left:876px;top:567px;" width="12" height="13" viewBox="0 0 12 13"><circle cx="6" cy="6.4" r="4.8" fill="#6a6a6a" stroke="#c4c4c4" stroke-width="1.3"/><path d="M2.6 9.8 A4.8 4.8 0 0 1 9.4 3 Z" fill="#c4c4c4"/></svg>
<div class="t" style="left:901px;top:564px;font-size:16px;line-height:18px;height:18px;color:#c4c4c4;white-space:nowrap;font-family:'Liberation Serif',serif;font-weight:bold;">T</div>
<svg style="left:924px;top:567px;" width="14" height="13" viewBox="0 0 14 13"><rect x="2" y="2" width="9.6" height="8.6" fill="none" stroke="#c4c4c4" stroke-width="1.2"/><rect x="0.4" y="0.4" width="3" height="3" fill="#535353" stroke="#c4c4c4" stroke-width="0.9"/><rect x="10.2" y="0.4" width="3" height="3" fill="#535353" stroke="#c4c4c4" stroke-width="0.9"/><rect x="0.4" y="9.2" width="3" height="3" fill="#535353" stroke="#c4c4c4" stroke-width="0.9"/><rect x="10.2" y="9.2" width="3" height="3" fill="#535353" stroke="#c4c4c4" stroke-width="0.9"/></svg>
<svg style="left:948px;top:567px;" width="14" height="14" viewBox="0 0 14 14"><path d="M4.6 0.6 L9.6 0.6 L12.4 3.4 L12.4 11.6 L4.6 11.6 Z" fill="#5e5e5e" stroke="#c4c4c4" stroke-width="1.1"/><path d="M9.4 0.8 L9.4 3.6 L12.2 3.6" fill="none" stroke="#c4c4c4" stroke-width="1"/><rect x="0.6" y="6.6" width="6" height="6" fill="#a8a8a8"/></svg>
<div style="left:982px;top:565px;width:10px;height:18px;background:#3c3c3c;border-radius:1px;"></div>
<div style="left:983px;top:566px;width:8px;height:8px;background:linear-gradient(#9a9a9a,#7a7a7a);"></div>
<div style="left:756px;top:587px;width:441px;height:1px;background:#3a3a3a;"></div>
<div style="left:756px;top:588px;width:441px;height:1px;background:#686868;"></div>
<div style="left:760px;top:592px;width:111px;height:20px;background:linear-gradient(#6c6c6c,#575757);border:1px solid #303030;border-radius:3px;"></div>
<div class="t" style="left:769px;top:594px;font-size:11.5px;line-height:16px;height:16px;color:#f4f4f4;white-space:nowrap;letter-spacing:0.5px;">正常</div>
<svg style="left:860px;top:597px;" width="7" height="10" viewBox="0 0 7 10"><path d="M0.5 4 L3.5 0.5 L6.5 4 Z M0.5 6 L6.5 6 L3.5 9.5 Z" fill="#f0f0f0"/></svg>
<div class="t" style="left:879px;top:594px;font-size:11.5px;line-height:16px;height:16px;color:#f0f0f0;white-space:nowrap;letter-spacing:0.5px;">不透明度<span style="margin-left:2px">:</span></div>
<div style="left:935px;top:592px;width:57px;height:20px;background:#3c3c3c;border-radius:3px;"></div>
<div style="left:936px;top:593px;width:36px;height:18px;background:#333;"></div>
<div style="left:972px;top:593px;width:19px;height:18px;background:linear-gradient(#6d6d6d,#585858);border-radius:0 2px 2px 0;"></div>
<svg style="left:978px;top:600px;" width="7" height="4" viewBox="0 0 7 4"><path d="M0.4 0.4 L6.2 0.4 L3.3 3.4 Z" fill="#f0f0f0"/></svg>
<div class="t" style="left:939px;top:594px;font-size:11.5px;line-height:16px;height:16px;color:#f0f0f0;white-space:nowrap;letter-spacing:-0.3px;">100%</div>
<div style="left:756px;top:615px;width:441px;height:1px;background:#3a3a3a;"></div>
<div style="left:756px;top:616px;width:441px;height:1px;background:#686868;"></div>
<div class="t" style="left:763px;top:622px;font-size:11.5px;line-height:16px;height:16px;color:#f0f0f0;white-space:nowrap;letter-spacing:0.5px;">锁定<span style="margin-left:2px">:</span></div>
<svg style="left:800px;top:625px;" width="11" height="11" viewBox="0 0 11 11"><rect x="0" y="0" width="11" height="11" fill="#686868"/><rect x="0" y="0" width="3.7" height="3.7" fill="#8e8e8e"/><rect x="7.3" y="0" width="3.7" height="3.7" fill="#8e8e8e"/><rect x="3.7" y="3.7" width="3.6" height="3.6" fill="#8e8e8e"/><rect x="0" y="7.3" width="3.7" height="3.7" fill="#8e8e8e"/><rect x="7.3" y="7.3" width="3.7" height="3.7" fill="#8e8e8e"/></svg>
<svg style="left:819px;top:622px;" width="18" height="15" viewBox="0 0 18 15"><path d="M15.6 0.4 L17.4 2 L9.4 11 L7.2 9 Z" fill="#8c8c8c"/><path d="M6.6 9.6 L9 11.8 C7.8 14 4 14.8 0.4 13.8 C3 13 4.4 11.6 6.6 9.6 Z" fill="#8c8c8c"/></svg>
<svg style="left:843px;top:623px;" width="13" height="13" viewBox="0 0 13 13"><path d="M6.5 1.6 L6.5 11.4 M1.6 6.5 L11.4 6.5" stroke="#c4c4c4" stroke-width="1.3"/><path d="M6.5 0 L8.8 2.8 L4.2 2.8 Z M6.5 13 L8.8 10.2 L4.2 10.2 Z M0 6.5 L2.8 4.2 L2.8 8.8 Z M13 6.5 L10.2 4.2 L10.2 8.8 Z" fill="#c4c4c4"/></svg>
<svg style="left:866px;top:622px;" width="12" height="15" viewBox="0 0 12 15"><path d="M3.2 7 L3.2 4.8 C3.2 1.2 8.4 1.2 8.4 4.8 L8.4 7" fill="none" stroke="#c4c4c4" stroke-width="1.6"/><rect x="0.8" y="6.6" width="10" height="7.4" rx="0.8" fill="#b4b4b4"/><rect x="5.1" y="9" width="1.4" height="3" fill="#535353"/></svg>
<div class="t" style="left:903px;top:622px;font-size:11.5px;line-height:16px;height:16px;color:#f0f0f0;white-space:nowrap;letter-spacing:0.5px;">填充<span style="margin-left:2px">:</span></div>
<div style="left:935px;top:620px;width:57px;height:20px;background:#3c3c3c;border-radius:3px;"></div>
<div style="left:936px;top:621px;width:36px;height:18px;background:#333;"></div>
<div style="left:972px;top:621px;width:19px;height:18px;background:linear-gradient(#6d6d6d,#585858);border-radius:0 2px 2px 0;"></div>
<svg style="left:978px;top:628px;" width="7" height="4" viewBox="0 0 7 4"><path d="M0.4 0.4 L6.2 0.4 L3.3 3.4 Z" fill="#f0f0f0"/></svg>
<div class="t" style="left:939px;top:622px;font-size:11.5px;line-height:16px;height:16px;color:#f0f0f0;white-space:nowrap;letter-spacing:-0.3px;">100%</div>
<div style="left:756px;top:645px;width:441px;height:1px;background:#2e2e2e;"></div>
<div style="left:756px;top:646px;width:441px;height:38px;background:#535353;"></div>
<div style="left:787px;top:646px;width:410px;height:38px;background:#596679;"></div>
<div style="left:756px;top:684px;width:441px;height:1px;background:#2e2e2e;"></div>
<div style="left:756px;top:685px;width:441px;height:38px;background:#535353;"></div>
<div style="left:756px;top:723px;width:441px;height:1px;background:#2e2e2e;"></div>
<div style="left:756px;top:724px;width:441px;height:39px;background:#535353;"></div>
<div style="left:756px;top:763px;width:441px;height:1px;background:#2e2e2e;"></div>
<div style="left:756px;top:764px;width:441px;height:78px;background:#454545;"></div>
<div style="left:786px;top:645px;width:1px;height:118px;background:#3a3a3a;"></div>
<svg style="left:764px;top:660px;" width="13" height="10" viewBox="0 0 13 10"><path d="M0.5 5 C3 0.8 10 0.8 12.5 5 C10 9.2 3 9.2 0.5 5 Z" fill="#b4b4b4"/><circle cx="6.8" cy="4.8" r="2.6" fill="#4a4a4a"/><circle cx="6.2" cy="4.2" r="0.9" fill="#c8c8c8"/></svg>
<svg style="left:764px;top:699px;" width="13" height="10" viewBox="0 0 13 10"><path d="M0.5 5 C3 0.8 10 0.8 12.5 5 C10 9.2 3 9.2 0.5 5 Z" fill="#b4b4b4"/><circle cx="6.8" cy="4.8" r="2.6" fill="#4a4a4a"/><circle cx="6.2" cy="4.2" r="0.9" fill="#c8c8c8"/></svg>
<svg style="left:764px;top:738px;" width="13" height="10" viewBox="0 0 13 10"><path d="M0.5 5 C3 0.8 10 0.8 12.5 5 C10 9.2 3 9.2 0.5 5 Z" fill="#b4b4b4"/><circle cx="6.8" cy="4.8" r="2.6" fill="#4a4a4a"/><circle cx="6.2" cy="4.2" r="0.9" fill="#c8c8c8"/></svg>
<svg style="left:788px;top:647px;" width="22" height="36" viewBox="0 0 22 36"><path d="M2 2 L20 2 L20 20.6 L7 20.6 L7 33.6 L2 33.6 Z" fill="#0a0a0a"/><rect x="3.2" y="3.4" width="0.9" height="16" fill="#dcdcd6"/><rect x="5.8" y="3.4" width="1.2" height="16" fill="#dcdcd6"/><rect x="8.7" y="3.4" width="1.3" height="16" fill="#dcdcd6"/><rect x="11.3" y="3.4" width="0.8" height="16" fill="#dcdcd6"/><rect x="13.3" y="3.4" width="1.7" height="16" fill="#dcdcd6"/><rect x="16.2" y="3.4" width="1.9" height="16" fill="#dcdcd6"/><rect x="3.2" y="19" width="0.9" height="13.4" fill="#dcdcd6"/><rect x="5.4" y="19" width="0.7" height="13.4" fill="#9a9a96"/><path d="M0.5 12 L0.5 0.5 L7 0.5 M15 0.5 L21.5 0.5 L21.5 12 M0.5 25 L0.5 35.5 L7 35.5 M15 35.5 L21.5 35.5 L21.5 25" fill="none" stroke="#fafafa" stroke-width="1"/><rect x="9.5" y="23.5" width="8" height="8" fill="none" stroke="#b4bccb" stroke-width="0.9"/><circle cx="9.5" cy="23.5" r="1.3" fill="#596679" stroke="#c4cbd8" stroke-width="0.8"/><circle cx="17.5" cy="23.5" r="1.3" fill="#596679" stroke="#c4cbd8" stroke-width="0.8"/><circle cx="9.5" cy="31.5" r="1.3" fill="#596679" stroke="#c4cbd8" stroke-width="0.8"/><circle cx="17.5" cy="31.5" r="1.3" fill="#596679" stroke="#c4cbd8" stroke-width="0.8"/></svg>
<div class="t" style="left:818px;top:659px;font-size:11.5px;line-height:16px;height:16px;color:#f4f4f4;white-space:nowrap;letter-spacing:0.5px;">矩形 1</div>
<div style="left:790px;top:688px;width:31px;height:31px;background:#e3e5d8;border:1px solid #1a1a1a;"></div>
<div style="left:791px;top:711px;width:29px;height:7px;background:#fafafa;"></div>
<div style="left:791px;top:710px;width:29px;height:1px;background:#1a1a1a;"></div>
<div style="left:794px;top:713px;width:24px;height:1px;background:#222;"></div>
<svg style="left:805px;top:714px;" width="5" height="3" viewBox="0 0 5 3"><path d="M2.5 0 L5 3 L0 3 Z" fill="#222"/></svg>
<svg style="left:825px;top:697px;" width="8" height="15" viewBox="0 0 8 15"><path d="M1.3 5.6 L1.3 4 C1.3 0.4 6.7 0.4 6.7 4 L6.7 5.6 M1.3 8.8 L1.3 10.4 C1.3 14 6.7 14 6.7 10.4 L6.7 8.8" fill="none" stroke="#a8a8a8" stroke-width="1.7"/><rect x="3.1" y="3.6" width="1.8" height="7.2" rx="0.6" fill="#c0c0c0"/></svg>
<div style="left:837px;top:688px;width:21px;height:32px;background:#fff;border:1px solid #1a1a1a;"></div>
<div class="t" style="left:868px;top:698px;font-size:11.5px;line-height:16px;height:16px;color:#f4f4f4;white-space:nowrap;letter-spacing:0.5px;">颜色填充 1</div>
<div style="left:790px;top:727px;width:21px;height:32px;background:#fff;border:1px solid #1a1a1a;"></div>
<div class="t" style="left:822px;top:737px;font-size:12px;line-height:16px;height:16px;color:#f4f4f4;white-space:nowrap;transform:skewX(-14deg);">背景</div>
<div style="left:1069px;top:799px;width:123px;height:38px;background:#fff;"></div>
<div class="t" style="left:1095px;top:806px;font-size:13.5px;line-height:18px;height:18px;color:#000;white-space:nowrap;font-weight:bold;letter-spacing:4.5px;-webkit-text-stroke:0.3px #000;">思洋互动</div>
<div class="t" style="left:1089px;top:820px;font-size:11px;line-height:14px;height:14px;color:#000;white-space:nowrap;font-weight:bold;font-family:'DejaVu Sans','Liberation Sans',sans-serif;letter-spacing:0.2px;-webkit-text-stroke:0.2px #000;">www.ciya.cn</div>
</div></body></html>
